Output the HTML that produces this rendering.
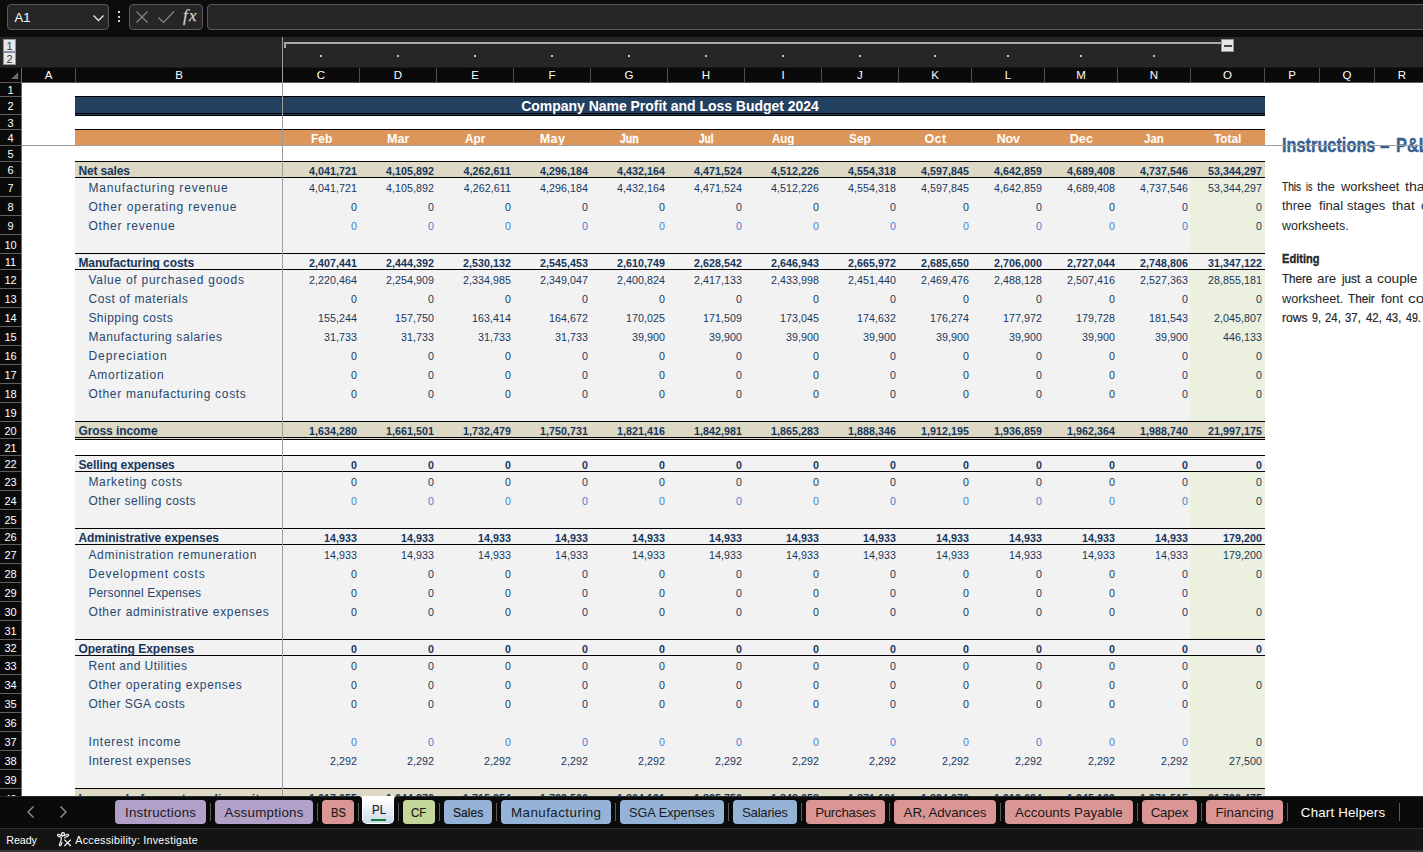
<!DOCTYPE html>
<html lang="en"><head><meta charset="utf-8"><title>Profit and Loss Budget 2024</title><style>
html,body{margin:0;padding:0;}
body{width:1423px;height:852px;overflow:hidden;background:#fff;position:relative;}
#root{position:absolute;left:0;top:0;width:1423px;height:852px;overflow:hidden;background:#fff;}
#root div,#root span,#root svg{position:absolute;}
#root span{white-space:nowrap;}
#sheet{left:0;top:0;width:1423px;height:796px;overflow:hidden;}
</style></head><body><div id="root">
<div id="sheet">
<div style="left:75px;top:178px;width:1190px;height:244px;background:#f2f2f2;"></div>
<div style="left:75px;top:456px;width:1190px;height:333px;background:#f2f2f2;"></div>
<div style="left:1190px;top:178px;width:75px;height:76px;background:#ebf1de;"></div>
<div style="left:1190px;top:270px;width:75px;height:152px;background:#ebf1de;"></div>
<div style="left:1190px;top:472px;width:75px;height:57px;background:#ebf1de;"></div>
<div style="left:1190px;top:545px;width:75px;height:95px;background:#ebf1de;"></div>
<div style="left:1190px;top:656px;width:75px;height:133px;background:#ebf1de;"></div>
<div style="left:75px;top:96px;width:1190px;height:20px;background:#244061;border-top:1px solid #000;border-bottom:1px solid #000;box-sizing:border-box;"></div>
<div style="left:75px;top:113px;width:1190px;height:1px;background:#000;"></div>
<div style="left:75px;top:129px;width:1190px;height:16px;background:#dd9659;border-top:1px solid #000;box-sizing:border-box;"></div>
<div style="left:75px;top:161px;width:1190px;height:17px;background:#ddd9c4;border-top:1px solid #000;border-bottom:1px solid #000;box-sizing:border-box;"></div>
<div style="left:75px;top:421px;width:1190px;height:19px;background:#ddd9c4;border-top:1px solid #000;border-bottom:1px solid #000;box-sizing:border-box;"></div>
<div style="left:75px;top:437px;width:1190px;height:1px;background:#000;"></div>
<div style="left:75px;top:788px;width:1190px;height:20px;background:#ddd9c4;border-top:1px solid #000;box-sizing:border-box;"></div>
<div style="left:75px;top:253px;width:1190px;height:1px;background:#000;"></div>
<div style="left:75px;top:269px;width:1190px;height:1px;background:#000;"></div>
<div style="left:75px;top:455px;width:1190px;height:1px;background:#000;"></div>
<div style="left:75px;top:471px;width:1190px;height:1px;background:#000;"></div>
<div style="left:75px;top:528px;width:1190px;height:1px;background:#000;"></div>
<div style="left:75px;top:544px;width:1190px;height:1px;background:#000;"></div>
<div style="left:75px;top:639px;width:1190px;height:1px;background:#000;"></div>
<div style="left:75px;top:655px;width:1190px;height:1px;background:#000;"></div>
<span style="top:162.84px;font:700 12px/16px 'Liberation Sans',sans-serif;color:#17365d;letter-spacing:-0.135px;left:78.40px;">Net sales</span>
<span style="top:164.30px;font:700 10.67px/14px 'Liberation Sans',sans-serif;color:#17365d;letter-spacing:0.070px;left:308.96px;">4,041,721</span>
<span style="top:164.30px;font:700 10.67px/14px 'Liberation Sans',sans-serif;color:#17365d;letter-spacing:0.070px;left:385.96px;">4,105,892</span>
<span style="top:164.30px;font:700 10.67px/14px 'Liberation Sans',sans-serif;color:#17365d;letter-spacing:0.070px;left:463.55px;">4,262,611</span>
<span style="top:164.30px;font:700 10.67px/14px 'Liberation Sans',sans-serif;color:#17365d;letter-spacing:0.070px;left:539.96px;">4,296,184</span>
<span style="top:164.30px;font:700 10.67px/14px 'Liberation Sans',sans-serif;color:#17365d;letter-spacing:0.070px;left:616.96px;">4,432,164</span>
<span style="top:164.30px;font:700 10.67px/14px 'Liberation Sans',sans-serif;color:#17365d;letter-spacing:0.070px;left:693.96px;">4,471,524</span>
<span style="top:164.30px;font:700 10.67px/14px 'Liberation Sans',sans-serif;color:#17365d;letter-spacing:0.070px;left:770.96px;">4,512,226</span>
<span style="top:164.30px;font:700 10.67px/14px 'Liberation Sans',sans-serif;color:#17365d;letter-spacing:0.070px;left:847.96px;">4,554,318</span>
<span style="top:164.30px;font:700 10.67px/14px 'Liberation Sans',sans-serif;color:#17365d;letter-spacing:0.070px;left:920.96px;">4,597,845</span>
<span style="top:164.30px;font:700 10.67px/14px 'Liberation Sans',sans-serif;color:#17365d;letter-spacing:0.070px;left:993.96px;">4,642,859</span>
<span style="top:164.30px;font:700 10.67px/14px 'Liberation Sans',sans-serif;color:#17365d;letter-spacing:0.070px;left:1066.96px;">4,689,408</span>
<span style="top:164.30px;font:700 10.67px/14px 'Liberation Sans',sans-serif;color:#17365d;letter-spacing:0.070px;left:1139.96px;">4,737,546</span>
<span style="top:164.30px;font:700 10.67px/14px 'Liberation Sans',sans-serif;color:#17365d;letter-spacing:0.070px;left:1207.97px;">53,344,297</span>
<span style="top:179.84px;font:400 12px/16px 'Liberation Sans',sans-serif;color:#26476f;letter-spacing:0.827px;left:88.40px;">Manufacturing revenue</span>
<span style="top:181.30px;font:400 10.67px/14px 'Liberation Sans',sans-serif;color:#17365d;letter-spacing:0.070px;left:308.96px;">4,041,721</span>
<span style="top:181.30px;font:400 10.67px/14px 'Liberation Sans',sans-serif;color:#17365d;letter-spacing:0.070px;left:385.96px;">4,105,892</span>
<span style="top:181.30px;font:400 10.67px/14px 'Liberation Sans',sans-serif;color:#17365d;letter-spacing:0.070px;left:463.76px;">4,262,611</span>
<span style="top:181.30px;font:400 10.67px/14px 'Liberation Sans',sans-serif;color:#17365d;letter-spacing:0.070px;left:539.96px;">4,296,184</span>
<span style="top:181.30px;font:400 10.67px/14px 'Liberation Sans',sans-serif;color:#17365d;letter-spacing:0.070px;left:616.96px;">4,432,164</span>
<span style="top:181.30px;font:400 10.67px/14px 'Liberation Sans',sans-serif;color:#17365d;letter-spacing:0.070px;left:693.96px;">4,471,524</span>
<span style="top:181.30px;font:400 10.67px/14px 'Liberation Sans',sans-serif;color:#17365d;letter-spacing:0.070px;left:770.96px;">4,512,226</span>
<span style="top:181.30px;font:400 10.67px/14px 'Liberation Sans',sans-serif;color:#17365d;letter-spacing:0.070px;left:847.96px;">4,554,318</span>
<span style="top:181.30px;font:400 10.67px/14px 'Liberation Sans',sans-serif;color:#17365d;letter-spacing:0.070px;left:920.96px;">4,597,845</span>
<span style="top:181.30px;font:400 10.67px/14px 'Liberation Sans',sans-serif;color:#17365d;letter-spacing:0.070px;left:993.96px;">4,642,859</span>
<span style="top:181.30px;font:400 10.67px/14px 'Liberation Sans',sans-serif;color:#17365d;letter-spacing:0.070px;left:1066.96px;">4,689,408</span>
<span style="top:181.30px;font:400 10.67px/14px 'Liberation Sans',sans-serif;color:#17365d;letter-spacing:0.070px;left:1139.96px;">4,737,546</span>
<span style="top:181.30px;font:400 10.67px/14px 'Liberation Sans',sans-serif;color:#17365d;letter-spacing:0.070px;left:1207.97px;">53,344,297</span>
<span style="top:198.84px;font:400 12px/16px 'Liberation Sans',sans-serif;color:#26476f;letter-spacing:0.819px;left:88.40px;">Other operating revenue</span>
<span style="top:200.30px;font:400 10.67px/14px 'Liberation Sans',sans-serif;color:#17365d;letter-spacing:0.070px;left:351.08px;">0</span>
<span style="top:200.30px;font:400 10.67px/14px 'Liberation Sans',sans-serif;color:#17365d;letter-spacing:0.070px;left:428.08px;">0</span>
<span style="top:200.30px;font:400 10.67px/14px 'Liberation Sans',sans-serif;color:#17365d;letter-spacing:0.070px;left:505.08px;">0</span>
<span style="top:200.30px;font:400 10.67px/14px 'Liberation Sans',sans-serif;color:#17365d;letter-spacing:0.070px;left:582.08px;">0</span>
<span style="top:200.30px;font:400 10.67px/14px 'Liberation Sans',sans-serif;color:#17365d;letter-spacing:0.070px;left:659.08px;">0</span>
<span style="top:200.30px;font:400 10.67px/14px 'Liberation Sans',sans-serif;color:#17365d;letter-spacing:0.070px;left:736.08px;">0</span>
<span style="top:200.30px;font:400 10.67px/14px 'Liberation Sans',sans-serif;color:#17365d;letter-spacing:0.070px;left:813.08px;">0</span>
<span style="top:200.30px;font:400 10.67px/14px 'Liberation Sans',sans-serif;color:#17365d;letter-spacing:0.070px;left:890.08px;">0</span>
<span style="top:200.30px;font:400 10.67px/14px 'Liberation Sans',sans-serif;color:#17365d;letter-spacing:0.070px;left:963.08px;">0</span>
<span style="top:200.30px;font:400 10.67px/14px 'Liberation Sans',sans-serif;color:#17365d;letter-spacing:0.070px;left:1036.08px;">0</span>
<span style="top:200.30px;font:400 10.67px/14px 'Liberation Sans',sans-serif;color:#17365d;letter-spacing:0.070px;left:1109.08px;">0</span>
<span style="top:200.30px;font:400 10.67px/14px 'Liberation Sans',sans-serif;color:#17365d;letter-spacing:0.070px;left:1182.08px;">0</span>
<span style="top:200.30px;font:400 10.67px/14px 'Liberation Sans',sans-serif;color:#17365d;letter-spacing:0.070px;left:1256.08px;">0</span>
<span style="top:217.84px;font:400 12px/16px 'Liberation Sans',sans-serif;color:#26476f;letter-spacing:0.797px;left:88.40px;">Other revenue</span>
<span style="top:219.30px;font:400 10.67px/14px 'Liberation Sans',sans-serif;color:#4680d2;letter-spacing:0.070px;left:351.08px;">0</span>
<span style="top:219.30px;font:400 10.67px/14px 'Liberation Sans',sans-serif;color:#4680d2;letter-spacing:0.070px;left:428.08px;">0</span>
<span style="top:219.30px;font:400 10.67px/14px 'Liberation Sans',sans-serif;color:#4680d2;letter-spacing:0.070px;left:505.08px;">0</span>
<span style="top:219.30px;font:400 10.67px/14px 'Liberation Sans',sans-serif;color:#4680d2;letter-spacing:0.070px;left:582.08px;">0</span>
<span style="top:219.30px;font:400 10.67px/14px 'Liberation Sans',sans-serif;color:#4680d2;letter-spacing:0.070px;left:659.08px;">0</span>
<span style="top:219.30px;font:400 10.67px/14px 'Liberation Sans',sans-serif;color:#4680d2;letter-spacing:0.070px;left:736.08px;">0</span>
<span style="top:219.30px;font:400 10.67px/14px 'Liberation Sans',sans-serif;color:#4680d2;letter-spacing:0.070px;left:813.08px;">0</span>
<span style="top:219.30px;font:400 10.67px/14px 'Liberation Sans',sans-serif;color:#4680d2;letter-spacing:0.070px;left:890.08px;">0</span>
<span style="top:219.30px;font:400 10.67px/14px 'Liberation Sans',sans-serif;color:#4680d2;letter-spacing:0.070px;left:963.08px;">0</span>
<span style="top:219.30px;font:400 10.67px/14px 'Liberation Sans',sans-serif;color:#4680d2;letter-spacing:0.070px;left:1036.08px;">0</span>
<span style="top:219.30px;font:400 10.67px/14px 'Liberation Sans',sans-serif;color:#4680d2;letter-spacing:0.070px;left:1109.08px;">0</span>
<span style="top:219.30px;font:400 10.67px/14px 'Liberation Sans',sans-serif;color:#4680d2;letter-spacing:0.070px;left:1182.08px;">0</span>
<span style="top:219.30px;font:400 10.67px/14px 'Liberation Sans',sans-serif;color:#17365d;letter-spacing:0.070px;left:1256.08px;">0</span>
<span style="top:254.84px;font:700 12px/16px 'Liberation Sans',sans-serif;color:#17365d;letter-spacing:-0.092px;left:78.40px;">Manufacturing costs</span>
<span style="top:256.30px;font:700 10.67px/14px 'Liberation Sans',sans-serif;color:#17365d;letter-spacing:0.070px;left:308.96px;">2,407,441</span>
<span style="top:256.30px;font:700 10.67px/14px 'Liberation Sans',sans-serif;color:#17365d;letter-spacing:0.070px;left:385.96px;">2,444,392</span>
<span style="top:256.30px;font:700 10.67px/14px 'Liberation Sans',sans-serif;color:#17365d;letter-spacing:0.070px;left:462.96px;">2,530,132</span>
<span style="top:256.30px;font:700 10.67px/14px 'Liberation Sans',sans-serif;color:#17365d;letter-spacing:0.070px;left:539.96px;">2,545,453</span>
<span style="top:256.30px;font:700 10.67px/14px 'Liberation Sans',sans-serif;color:#17365d;letter-spacing:0.070px;left:616.96px;">2,610,749</span>
<span style="top:256.30px;font:700 10.67px/14px 'Liberation Sans',sans-serif;color:#17365d;letter-spacing:0.070px;left:693.96px;">2,628,542</span>
<span style="top:256.30px;font:700 10.67px/14px 'Liberation Sans',sans-serif;color:#17365d;letter-spacing:0.070px;left:770.96px;">2,646,943</span>
<span style="top:256.30px;font:700 10.67px/14px 'Liberation Sans',sans-serif;color:#17365d;letter-spacing:0.070px;left:847.96px;">2,665,972</span>
<span style="top:256.30px;font:700 10.67px/14px 'Liberation Sans',sans-serif;color:#17365d;letter-spacing:0.070px;left:920.96px;">2,685,650</span>
<span style="top:256.30px;font:700 10.67px/14px 'Liberation Sans',sans-serif;color:#17365d;letter-spacing:0.070px;left:993.96px;">2,706,000</span>
<span style="top:256.30px;font:700 10.67px/14px 'Liberation Sans',sans-serif;color:#17365d;letter-spacing:0.070px;left:1066.96px;">2,727,044</span>
<span style="top:256.30px;font:700 10.67px/14px 'Liberation Sans',sans-serif;color:#17365d;letter-spacing:0.070px;left:1139.96px;">2,748,806</span>
<span style="top:256.30px;font:700 10.67px/14px 'Liberation Sans',sans-serif;color:#17365d;letter-spacing:0.070px;left:1207.97px;">31,347,122</span>
<span style="top:271.84px;font:400 12px/16px 'Liberation Sans',sans-serif;color:#26476f;letter-spacing:0.737px;left:88.40px;">Value of purchased goods</span>
<span style="top:273.30px;font:400 10.67px/14px 'Liberation Sans',sans-serif;color:#17365d;letter-spacing:0.070px;left:308.96px;">2,220,464</span>
<span style="top:273.30px;font:400 10.67px/14px 'Liberation Sans',sans-serif;color:#17365d;letter-spacing:0.070px;left:385.96px;">2,254,909</span>
<span style="top:273.30px;font:400 10.67px/14px 'Liberation Sans',sans-serif;color:#17365d;letter-spacing:0.070px;left:462.96px;">2,334,985</span>
<span style="top:273.30px;font:400 10.67px/14px 'Liberation Sans',sans-serif;color:#17365d;letter-spacing:0.070px;left:539.96px;">2,349,047</span>
<span style="top:273.30px;font:400 10.67px/14px 'Liberation Sans',sans-serif;color:#17365d;letter-spacing:0.070px;left:616.96px;">2,400,824</span>
<span style="top:273.30px;font:400 10.67px/14px 'Liberation Sans',sans-serif;color:#17365d;letter-spacing:0.070px;left:693.96px;">2,417,133</span>
<span style="top:273.30px;font:400 10.67px/14px 'Liberation Sans',sans-serif;color:#17365d;letter-spacing:0.070px;left:770.96px;">2,433,998</span>
<span style="top:273.30px;font:400 10.67px/14px 'Liberation Sans',sans-serif;color:#17365d;letter-spacing:0.070px;left:847.96px;">2,451,440</span>
<span style="top:273.30px;font:400 10.67px/14px 'Liberation Sans',sans-serif;color:#17365d;letter-spacing:0.070px;left:920.96px;">2,469,476</span>
<span style="top:273.30px;font:400 10.67px/14px 'Liberation Sans',sans-serif;color:#17365d;letter-spacing:0.070px;left:993.96px;">2,488,128</span>
<span style="top:273.30px;font:400 10.67px/14px 'Liberation Sans',sans-serif;color:#17365d;letter-spacing:0.070px;left:1066.96px;">2,507,416</span>
<span style="top:273.30px;font:400 10.67px/14px 'Liberation Sans',sans-serif;color:#17365d;letter-spacing:0.070px;left:1139.96px;">2,527,363</span>
<span style="top:273.30px;font:400 10.67px/14px 'Liberation Sans',sans-serif;color:#17365d;letter-spacing:0.070px;left:1207.97px;">28,855,181</span>
<span style="top:290.84px;font:400 12px/16px 'Liberation Sans',sans-serif;color:#26476f;letter-spacing:0.590px;left:88.40px;">Cost of materials</span>
<span style="top:292.30px;font:400 10.67px/14px 'Liberation Sans',sans-serif;color:#17365d;letter-spacing:0.070px;left:351.08px;">0</span>
<span style="top:292.30px;font:400 10.67px/14px 'Liberation Sans',sans-serif;color:#17365d;letter-spacing:0.070px;left:428.08px;">0</span>
<span style="top:292.30px;font:400 10.67px/14px 'Liberation Sans',sans-serif;color:#17365d;letter-spacing:0.070px;left:505.08px;">0</span>
<span style="top:292.30px;font:400 10.67px/14px 'Liberation Sans',sans-serif;color:#17365d;letter-spacing:0.070px;left:582.08px;">0</span>
<span style="top:292.30px;font:400 10.67px/14px 'Liberation Sans',sans-serif;color:#17365d;letter-spacing:0.070px;left:659.08px;">0</span>
<span style="top:292.30px;font:400 10.67px/14px 'Liberation Sans',sans-serif;color:#17365d;letter-spacing:0.070px;left:736.08px;">0</span>
<span style="top:292.30px;font:400 10.67px/14px 'Liberation Sans',sans-serif;color:#17365d;letter-spacing:0.070px;left:813.08px;">0</span>
<span style="top:292.30px;font:400 10.67px/14px 'Liberation Sans',sans-serif;color:#17365d;letter-spacing:0.070px;left:890.08px;">0</span>
<span style="top:292.30px;font:400 10.67px/14px 'Liberation Sans',sans-serif;color:#17365d;letter-spacing:0.070px;left:963.08px;">0</span>
<span style="top:292.30px;font:400 10.67px/14px 'Liberation Sans',sans-serif;color:#17365d;letter-spacing:0.070px;left:1036.08px;">0</span>
<span style="top:292.30px;font:400 10.67px/14px 'Liberation Sans',sans-serif;color:#17365d;letter-spacing:0.070px;left:1109.08px;">0</span>
<span style="top:292.30px;font:400 10.67px/14px 'Liberation Sans',sans-serif;color:#17365d;letter-spacing:0.070px;left:1182.08px;">0</span>
<span style="top:292.30px;font:400 10.67px/14px 'Liberation Sans',sans-serif;color:#17365d;letter-spacing:0.070px;left:1256.08px;">0</span>
<span style="top:309.84px;font:400 12px/16px 'Liberation Sans',sans-serif;color:#26476f;letter-spacing:0.480px;left:88.40px;">Shipping costs</span>
<span style="top:311.30px;font:400 10.67px/14px 'Liberation Sans',sans-serif;color:#17365d;letter-spacing:0.070px;left:318.01px;">155,244</span>
<span style="top:311.30px;font:400 10.67px/14px 'Liberation Sans',sans-serif;color:#17365d;letter-spacing:0.070px;left:395.01px;">157,750</span>
<span style="top:311.30px;font:400 10.67px/14px 'Liberation Sans',sans-serif;color:#17365d;letter-spacing:0.070px;left:472.01px;">163,414</span>
<span style="top:311.30px;font:400 10.67px/14px 'Liberation Sans',sans-serif;color:#17365d;letter-spacing:0.070px;left:549.01px;">164,672</span>
<span style="top:311.30px;font:400 10.67px/14px 'Liberation Sans',sans-serif;color:#17365d;letter-spacing:0.070px;left:626.01px;">170,025</span>
<span style="top:311.30px;font:400 10.67px/14px 'Liberation Sans',sans-serif;color:#17365d;letter-spacing:0.070px;left:703.01px;">171,509</span>
<span style="top:311.30px;font:400 10.67px/14px 'Liberation Sans',sans-serif;color:#17365d;letter-spacing:0.070px;left:780.01px;">173,045</span>
<span style="top:311.30px;font:400 10.67px/14px 'Liberation Sans',sans-serif;color:#17365d;letter-spacing:0.070px;left:857.01px;">174,632</span>
<span style="top:311.30px;font:400 10.67px/14px 'Liberation Sans',sans-serif;color:#17365d;letter-spacing:0.070px;left:930.01px;">176,274</span>
<span style="top:311.30px;font:400 10.67px/14px 'Liberation Sans',sans-serif;color:#17365d;letter-spacing:0.070px;left:1003.01px;">177,972</span>
<span style="top:311.30px;font:400 10.67px/14px 'Liberation Sans',sans-serif;color:#17365d;letter-spacing:0.070px;left:1076.01px;">179,728</span>
<span style="top:311.30px;font:400 10.67px/14px 'Liberation Sans',sans-serif;color:#17365d;letter-spacing:0.070px;left:1149.01px;">181,543</span>
<span style="top:311.30px;font:400 10.67px/14px 'Liberation Sans',sans-serif;color:#17365d;letter-spacing:0.070px;left:1213.96px;">2,045,807</span>
<span style="top:328.84px;font:400 12px/16px 'Liberation Sans',sans-serif;color:#26476f;letter-spacing:0.613px;left:88.40px;">Manufacturing salaries</span>
<span style="top:330.30px;font:400 10.67px/14px 'Liberation Sans',sans-serif;color:#17365d;letter-spacing:0.070px;left:324.00px;">31,733</span>
<span style="top:330.30px;font:400 10.67px/14px 'Liberation Sans',sans-serif;color:#17365d;letter-spacing:0.070px;left:401.00px;">31,733</span>
<span style="top:330.30px;font:400 10.67px/14px 'Liberation Sans',sans-serif;color:#17365d;letter-spacing:0.070px;left:478.00px;">31,733</span>
<span style="top:330.30px;font:400 10.67px/14px 'Liberation Sans',sans-serif;color:#17365d;letter-spacing:0.070px;left:555.00px;">31,733</span>
<span style="top:330.30px;font:400 10.67px/14px 'Liberation Sans',sans-serif;color:#17365d;letter-spacing:0.070px;left:632.00px;">39,900</span>
<span style="top:330.30px;font:400 10.67px/14px 'Liberation Sans',sans-serif;color:#17365d;letter-spacing:0.070px;left:709.00px;">39,900</span>
<span style="top:330.30px;font:400 10.67px/14px 'Liberation Sans',sans-serif;color:#17365d;letter-spacing:0.070px;left:786.00px;">39,900</span>
<span style="top:330.30px;font:400 10.67px/14px 'Liberation Sans',sans-serif;color:#17365d;letter-spacing:0.070px;left:863.00px;">39,900</span>
<span style="top:330.30px;font:400 10.67px/14px 'Liberation Sans',sans-serif;color:#17365d;letter-spacing:0.070px;left:936.00px;">39,900</span>
<span style="top:330.30px;font:400 10.67px/14px 'Liberation Sans',sans-serif;color:#17365d;letter-spacing:0.070px;left:1009.00px;">39,900</span>
<span style="top:330.30px;font:400 10.67px/14px 'Liberation Sans',sans-serif;color:#17365d;letter-spacing:0.070px;left:1082.00px;">39,900</span>
<span style="top:330.30px;font:400 10.67px/14px 'Liberation Sans',sans-serif;color:#17365d;letter-spacing:0.070px;left:1155.00px;">39,900</span>
<span style="top:330.30px;font:400 10.67px/14px 'Liberation Sans',sans-serif;color:#17365d;letter-spacing:0.070px;left:1223.01px;">446,133</span>
<span style="top:347.84px;font:400 12px/16px 'Liberation Sans',sans-serif;color:#26476f;letter-spacing:0.984px;left:88.40px;">Depreciation</span>
<span style="top:349.30px;font:400 10.67px/14px 'Liberation Sans',sans-serif;color:#17365d;letter-spacing:0.070px;left:351.08px;">0</span>
<span style="top:349.30px;font:400 10.67px/14px 'Liberation Sans',sans-serif;color:#17365d;letter-spacing:0.070px;left:428.08px;">0</span>
<span style="top:349.30px;font:400 10.67px/14px 'Liberation Sans',sans-serif;color:#17365d;letter-spacing:0.070px;left:505.08px;">0</span>
<span style="top:349.30px;font:400 10.67px/14px 'Liberation Sans',sans-serif;color:#17365d;letter-spacing:0.070px;left:582.08px;">0</span>
<span style="top:349.30px;font:400 10.67px/14px 'Liberation Sans',sans-serif;color:#17365d;letter-spacing:0.070px;left:659.08px;">0</span>
<span style="top:349.30px;font:400 10.67px/14px 'Liberation Sans',sans-serif;color:#17365d;letter-spacing:0.070px;left:736.08px;">0</span>
<span style="top:349.30px;font:400 10.67px/14px 'Liberation Sans',sans-serif;color:#17365d;letter-spacing:0.070px;left:813.08px;">0</span>
<span style="top:349.30px;font:400 10.67px/14px 'Liberation Sans',sans-serif;color:#17365d;letter-spacing:0.070px;left:890.08px;">0</span>
<span style="top:349.30px;font:400 10.67px/14px 'Liberation Sans',sans-serif;color:#17365d;letter-spacing:0.070px;left:963.08px;">0</span>
<span style="top:349.30px;font:400 10.67px/14px 'Liberation Sans',sans-serif;color:#17365d;letter-spacing:0.070px;left:1036.08px;">0</span>
<span style="top:349.30px;font:400 10.67px/14px 'Liberation Sans',sans-serif;color:#17365d;letter-spacing:0.070px;left:1109.08px;">0</span>
<span style="top:349.30px;font:400 10.67px/14px 'Liberation Sans',sans-serif;color:#17365d;letter-spacing:0.070px;left:1182.08px;">0</span>
<span style="top:349.30px;font:400 10.67px/14px 'Liberation Sans',sans-serif;color:#17365d;letter-spacing:0.070px;left:1256.08px;">0</span>
<span style="top:366.84px;font:400 12px/16px 'Liberation Sans',sans-serif;color:#26476f;letter-spacing:0.771px;left:88.40px;">Amortization</span>
<span style="top:368.30px;font:400 10.67px/14px 'Liberation Sans',sans-serif;color:#17365d;letter-spacing:0.070px;left:351.08px;">0</span>
<span style="top:368.30px;font:400 10.67px/14px 'Liberation Sans',sans-serif;color:#17365d;letter-spacing:0.070px;left:428.08px;">0</span>
<span style="top:368.30px;font:400 10.67px/14px 'Liberation Sans',sans-serif;color:#17365d;letter-spacing:0.070px;left:505.08px;">0</span>
<span style="top:368.30px;font:400 10.67px/14px 'Liberation Sans',sans-serif;color:#17365d;letter-spacing:0.070px;left:582.08px;">0</span>
<span style="top:368.30px;font:400 10.67px/14px 'Liberation Sans',sans-serif;color:#17365d;letter-spacing:0.070px;left:659.08px;">0</span>
<span style="top:368.30px;font:400 10.67px/14px 'Liberation Sans',sans-serif;color:#17365d;letter-spacing:0.070px;left:736.08px;">0</span>
<span style="top:368.30px;font:400 10.67px/14px 'Liberation Sans',sans-serif;color:#17365d;letter-spacing:0.070px;left:813.08px;">0</span>
<span style="top:368.30px;font:400 10.67px/14px 'Liberation Sans',sans-serif;color:#17365d;letter-spacing:0.070px;left:890.08px;">0</span>
<span style="top:368.30px;font:400 10.67px/14px 'Liberation Sans',sans-serif;color:#17365d;letter-spacing:0.070px;left:963.08px;">0</span>
<span style="top:368.30px;font:400 10.67px/14px 'Liberation Sans',sans-serif;color:#17365d;letter-spacing:0.070px;left:1036.08px;">0</span>
<span style="top:368.30px;font:400 10.67px/14px 'Liberation Sans',sans-serif;color:#17365d;letter-spacing:0.070px;left:1109.08px;">0</span>
<span style="top:368.30px;font:400 10.67px/14px 'Liberation Sans',sans-serif;color:#17365d;letter-spacing:0.070px;left:1182.08px;">0</span>
<span style="top:368.30px;font:400 10.67px/14px 'Liberation Sans',sans-serif;color:#17365d;letter-spacing:0.070px;left:1256.08px;">0</span>
<span style="top:385.84px;font:400 12px/16px 'Liberation Sans',sans-serif;color:#26476f;letter-spacing:0.698px;left:88.40px;">Other manufacturing costs</span>
<span style="top:387.30px;font:400 10.67px/14px 'Liberation Sans',sans-serif;color:#17365d;letter-spacing:0.070px;left:351.08px;">0</span>
<span style="top:387.30px;font:400 10.67px/14px 'Liberation Sans',sans-serif;color:#17365d;letter-spacing:0.070px;left:428.08px;">0</span>
<span style="top:387.30px;font:400 10.67px/14px 'Liberation Sans',sans-serif;color:#17365d;letter-spacing:0.070px;left:505.08px;">0</span>
<span style="top:387.30px;font:400 10.67px/14px 'Liberation Sans',sans-serif;color:#17365d;letter-spacing:0.070px;left:582.08px;">0</span>
<span style="top:387.30px;font:400 10.67px/14px 'Liberation Sans',sans-serif;color:#17365d;letter-spacing:0.070px;left:659.08px;">0</span>
<span style="top:387.30px;font:400 10.67px/14px 'Liberation Sans',sans-serif;color:#17365d;letter-spacing:0.070px;left:736.08px;">0</span>
<span style="top:387.30px;font:400 10.67px/14px 'Liberation Sans',sans-serif;color:#17365d;letter-spacing:0.070px;left:813.08px;">0</span>
<span style="top:387.30px;font:400 10.67px/14px 'Liberation Sans',sans-serif;color:#17365d;letter-spacing:0.070px;left:890.08px;">0</span>
<span style="top:387.30px;font:400 10.67px/14px 'Liberation Sans',sans-serif;color:#17365d;letter-spacing:0.070px;left:963.08px;">0</span>
<span style="top:387.30px;font:400 10.67px/14px 'Liberation Sans',sans-serif;color:#17365d;letter-spacing:0.070px;left:1036.08px;">0</span>
<span style="top:387.30px;font:400 10.67px/14px 'Liberation Sans',sans-serif;color:#17365d;letter-spacing:0.070px;left:1109.08px;">0</span>
<span style="top:387.30px;font:400 10.67px/14px 'Liberation Sans',sans-serif;color:#17365d;letter-spacing:0.070px;left:1182.08px;">0</span>
<span style="top:387.30px;font:400 10.67px/14px 'Liberation Sans',sans-serif;color:#17365d;letter-spacing:0.070px;left:1256.08px;">0</span>
<span style="top:422.84px;font:700 12px/16px 'Liberation Sans',sans-serif;color:#17365d;letter-spacing:-0.076px;left:78.40px;">Gross income</span>
<span style="top:424.30px;font:700 10.67px/14px 'Liberation Sans',sans-serif;color:#17365d;letter-spacing:0.070px;left:308.96px;">1,634,280</span>
<span style="top:424.30px;font:700 10.67px/14px 'Liberation Sans',sans-serif;color:#17365d;letter-spacing:0.070px;left:385.96px;">1,661,501</span>
<span style="top:424.30px;font:700 10.67px/14px 'Liberation Sans',sans-serif;color:#17365d;letter-spacing:0.070px;left:462.96px;">1,732,479</span>
<span style="top:424.30px;font:700 10.67px/14px 'Liberation Sans',sans-serif;color:#17365d;letter-spacing:0.070px;left:539.96px;">1,750,731</span>
<span style="top:424.30px;font:700 10.67px/14px 'Liberation Sans',sans-serif;color:#17365d;letter-spacing:0.070px;left:616.96px;">1,821,416</span>
<span style="top:424.30px;font:700 10.67px/14px 'Liberation Sans',sans-serif;color:#17365d;letter-spacing:0.070px;left:693.96px;">1,842,981</span>
<span style="top:424.30px;font:700 10.67px/14px 'Liberation Sans',sans-serif;color:#17365d;letter-spacing:0.070px;left:770.96px;">1,865,283</span>
<span style="top:424.30px;font:700 10.67px/14px 'Liberation Sans',sans-serif;color:#17365d;letter-spacing:0.070px;left:847.96px;">1,888,346</span>
<span style="top:424.30px;font:700 10.67px/14px 'Liberation Sans',sans-serif;color:#17365d;letter-spacing:0.070px;left:920.96px;">1,912,195</span>
<span style="top:424.30px;font:700 10.67px/14px 'Liberation Sans',sans-serif;color:#17365d;letter-spacing:0.070px;left:993.96px;">1,936,859</span>
<span style="top:424.30px;font:700 10.67px/14px 'Liberation Sans',sans-serif;color:#17365d;letter-spacing:0.070px;left:1066.96px;">1,962,364</span>
<span style="top:424.30px;font:700 10.67px/14px 'Liberation Sans',sans-serif;color:#17365d;letter-spacing:0.070px;left:1139.96px;">1,988,740</span>
<span style="top:424.30px;font:700 10.67px/14px 'Liberation Sans',sans-serif;color:#17365d;letter-spacing:0.070px;left:1207.97px;">21,997,175</span>
<span style="top:456.84px;font:700 12px/16px 'Liberation Sans',sans-serif;color:#17365d;letter-spacing:-0.065px;left:78.40px;">Selling expenses</span>
<span style="top:458.30px;font:700 10.67px/14px 'Liberation Sans',sans-serif;color:#17365d;letter-spacing:0.070px;left:351.08px;">0</span>
<span style="top:458.30px;font:700 10.67px/14px 'Liberation Sans',sans-serif;color:#17365d;letter-spacing:0.070px;left:428.08px;">0</span>
<span style="top:458.30px;font:700 10.67px/14px 'Liberation Sans',sans-serif;color:#17365d;letter-spacing:0.070px;left:505.08px;">0</span>
<span style="top:458.30px;font:700 10.67px/14px 'Liberation Sans',sans-serif;color:#17365d;letter-spacing:0.070px;left:582.08px;">0</span>
<span style="top:458.30px;font:700 10.67px/14px 'Liberation Sans',sans-serif;color:#17365d;letter-spacing:0.070px;left:659.08px;">0</span>
<span style="top:458.30px;font:700 10.67px/14px 'Liberation Sans',sans-serif;color:#17365d;letter-spacing:0.070px;left:736.08px;">0</span>
<span style="top:458.30px;font:700 10.67px/14px 'Liberation Sans',sans-serif;color:#17365d;letter-spacing:0.070px;left:813.08px;">0</span>
<span style="top:458.30px;font:700 10.67px/14px 'Liberation Sans',sans-serif;color:#17365d;letter-spacing:0.070px;left:890.08px;">0</span>
<span style="top:458.30px;font:700 10.67px/14px 'Liberation Sans',sans-serif;color:#17365d;letter-spacing:0.070px;left:963.08px;">0</span>
<span style="top:458.30px;font:700 10.67px/14px 'Liberation Sans',sans-serif;color:#17365d;letter-spacing:0.070px;left:1036.08px;">0</span>
<span style="top:458.30px;font:700 10.67px/14px 'Liberation Sans',sans-serif;color:#17365d;letter-spacing:0.070px;left:1109.08px;">0</span>
<span style="top:458.30px;font:700 10.67px/14px 'Liberation Sans',sans-serif;color:#17365d;letter-spacing:0.070px;left:1182.08px;">0</span>
<span style="top:458.30px;font:700 10.67px/14px 'Liberation Sans',sans-serif;color:#17365d;letter-spacing:0.070px;left:1256.08px;">0</span>
<span style="top:473.84px;font:400 12px/16px 'Liberation Sans',sans-serif;color:#26476f;letter-spacing:0.681px;left:88.40px;">Marketing costs</span>
<span style="top:475.30px;font:400 10.67px/14px 'Liberation Sans',sans-serif;color:#17365d;letter-spacing:0.070px;left:351.08px;">0</span>
<span style="top:475.30px;font:400 10.67px/14px 'Liberation Sans',sans-serif;color:#17365d;letter-spacing:0.070px;left:428.08px;">0</span>
<span style="top:475.30px;font:400 10.67px/14px 'Liberation Sans',sans-serif;color:#17365d;letter-spacing:0.070px;left:505.08px;">0</span>
<span style="top:475.30px;font:400 10.67px/14px 'Liberation Sans',sans-serif;color:#17365d;letter-spacing:0.070px;left:582.08px;">0</span>
<span style="top:475.30px;font:400 10.67px/14px 'Liberation Sans',sans-serif;color:#17365d;letter-spacing:0.070px;left:659.08px;">0</span>
<span style="top:475.30px;font:400 10.67px/14px 'Liberation Sans',sans-serif;color:#17365d;letter-spacing:0.070px;left:736.08px;">0</span>
<span style="top:475.30px;font:400 10.67px/14px 'Liberation Sans',sans-serif;color:#17365d;letter-spacing:0.070px;left:813.08px;">0</span>
<span style="top:475.30px;font:400 10.67px/14px 'Liberation Sans',sans-serif;color:#17365d;letter-spacing:0.070px;left:890.08px;">0</span>
<span style="top:475.30px;font:400 10.67px/14px 'Liberation Sans',sans-serif;color:#17365d;letter-spacing:0.070px;left:963.08px;">0</span>
<span style="top:475.30px;font:400 10.67px/14px 'Liberation Sans',sans-serif;color:#17365d;letter-spacing:0.070px;left:1036.08px;">0</span>
<span style="top:475.30px;font:400 10.67px/14px 'Liberation Sans',sans-serif;color:#17365d;letter-spacing:0.070px;left:1109.08px;">0</span>
<span style="top:475.30px;font:400 10.67px/14px 'Liberation Sans',sans-serif;color:#17365d;letter-spacing:0.070px;left:1182.08px;">0</span>
<span style="top:475.30px;font:400 10.67px/14px 'Liberation Sans',sans-serif;color:#17365d;letter-spacing:0.070px;left:1256.08px;">0</span>
<span style="top:492.84px;font:400 12px/16px 'Liberation Sans',sans-serif;color:#26476f;letter-spacing:0.472px;left:88.40px;">Other selling costs</span>
<span style="top:494.30px;font:400 10.67px/14px 'Liberation Sans',sans-serif;color:#4680d2;letter-spacing:0.070px;left:351.08px;">0</span>
<span style="top:494.30px;font:400 10.67px/14px 'Liberation Sans',sans-serif;color:#4680d2;letter-spacing:0.070px;left:428.08px;">0</span>
<span style="top:494.30px;font:400 10.67px/14px 'Liberation Sans',sans-serif;color:#4680d2;letter-spacing:0.070px;left:505.08px;">0</span>
<span style="top:494.30px;font:400 10.67px/14px 'Liberation Sans',sans-serif;color:#4680d2;letter-spacing:0.070px;left:582.08px;">0</span>
<span style="top:494.30px;font:400 10.67px/14px 'Liberation Sans',sans-serif;color:#4680d2;letter-spacing:0.070px;left:659.08px;">0</span>
<span style="top:494.30px;font:400 10.67px/14px 'Liberation Sans',sans-serif;color:#4680d2;letter-spacing:0.070px;left:736.08px;">0</span>
<span style="top:494.30px;font:400 10.67px/14px 'Liberation Sans',sans-serif;color:#4680d2;letter-spacing:0.070px;left:813.08px;">0</span>
<span style="top:494.30px;font:400 10.67px/14px 'Liberation Sans',sans-serif;color:#4680d2;letter-spacing:0.070px;left:890.08px;">0</span>
<span style="top:494.30px;font:400 10.67px/14px 'Liberation Sans',sans-serif;color:#4680d2;letter-spacing:0.070px;left:963.08px;">0</span>
<span style="top:494.30px;font:400 10.67px/14px 'Liberation Sans',sans-serif;color:#4680d2;letter-spacing:0.070px;left:1036.08px;">0</span>
<span style="top:494.30px;font:400 10.67px/14px 'Liberation Sans',sans-serif;color:#4680d2;letter-spacing:0.070px;left:1109.08px;">0</span>
<span style="top:494.30px;font:400 10.67px/14px 'Liberation Sans',sans-serif;color:#4680d2;letter-spacing:0.070px;left:1182.08px;">0</span>
<span style="top:494.30px;font:400 10.67px/14px 'Liberation Sans',sans-serif;color:#17365d;letter-spacing:0.070px;left:1256.08px;">0</span>
<span style="top:529.84px;font:700 12px/16px 'Liberation Sans',sans-serif;color:#17365d;letter-spacing:-0.037px;left:78.40px;">Administrative expenses</span>
<span style="top:531.30px;font:700 10.67px/14px 'Liberation Sans',sans-serif;color:#17365d;letter-spacing:0.070px;left:324.00px;">14,933</span>
<span style="top:531.30px;font:700 10.67px/14px 'Liberation Sans',sans-serif;color:#17365d;letter-spacing:0.070px;left:401.00px;">14,933</span>
<span style="top:531.30px;font:700 10.67px/14px 'Liberation Sans',sans-serif;color:#17365d;letter-spacing:0.070px;left:478.00px;">14,933</span>
<span style="top:531.30px;font:700 10.67px/14px 'Liberation Sans',sans-serif;color:#17365d;letter-spacing:0.070px;left:555.00px;">14,933</span>
<span style="top:531.30px;font:700 10.67px/14px 'Liberation Sans',sans-serif;color:#17365d;letter-spacing:0.070px;left:632.00px;">14,933</span>
<span style="top:531.30px;font:700 10.67px/14px 'Liberation Sans',sans-serif;color:#17365d;letter-spacing:0.070px;left:709.00px;">14,933</span>
<span style="top:531.30px;font:700 10.67px/14px 'Liberation Sans',sans-serif;color:#17365d;letter-spacing:0.070px;left:786.00px;">14,933</span>
<span style="top:531.30px;font:700 10.67px/14px 'Liberation Sans',sans-serif;color:#17365d;letter-spacing:0.070px;left:863.00px;">14,933</span>
<span style="top:531.30px;font:700 10.67px/14px 'Liberation Sans',sans-serif;color:#17365d;letter-spacing:0.070px;left:936.00px;">14,933</span>
<span style="top:531.30px;font:700 10.67px/14px 'Liberation Sans',sans-serif;color:#17365d;letter-spacing:0.070px;left:1009.00px;">14,933</span>
<span style="top:531.30px;font:700 10.67px/14px 'Liberation Sans',sans-serif;color:#17365d;letter-spacing:0.070px;left:1082.00px;">14,933</span>
<span style="top:531.30px;font:700 10.67px/14px 'Liberation Sans',sans-serif;color:#17365d;letter-spacing:0.070px;left:1155.00px;">14,933</span>
<span style="top:531.30px;font:700 10.67px/14px 'Liberation Sans',sans-serif;color:#17365d;letter-spacing:0.070px;left:1223.01px;">179,200</span>
<span style="top:546.84px;font:400 12px/16px 'Liberation Sans',sans-serif;color:#26476f;letter-spacing:0.690px;left:88.40px;">Administration remuneration</span>
<span style="top:548.30px;font:400 10.67px/14px 'Liberation Sans',sans-serif;color:#17365d;letter-spacing:0.070px;left:324.00px;">14,933</span>
<span style="top:548.30px;font:400 10.67px/14px 'Liberation Sans',sans-serif;color:#17365d;letter-spacing:0.070px;left:401.00px;">14,933</span>
<span style="top:548.30px;font:400 10.67px/14px 'Liberation Sans',sans-serif;color:#17365d;letter-spacing:0.070px;left:478.00px;">14,933</span>
<span style="top:548.30px;font:400 10.67px/14px 'Liberation Sans',sans-serif;color:#17365d;letter-spacing:0.070px;left:555.00px;">14,933</span>
<span style="top:548.30px;font:400 10.67px/14px 'Liberation Sans',sans-serif;color:#17365d;letter-spacing:0.070px;left:632.00px;">14,933</span>
<span style="top:548.30px;font:400 10.67px/14px 'Liberation Sans',sans-serif;color:#17365d;letter-spacing:0.070px;left:709.00px;">14,933</span>
<span style="top:548.30px;font:400 10.67px/14px 'Liberation Sans',sans-serif;color:#17365d;letter-spacing:0.070px;left:786.00px;">14,933</span>
<span style="top:548.30px;font:400 10.67px/14px 'Liberation Sans',sans-serif;color:#17365d;letter-spacing:0.070px;left:863.00px;">14,933</span>
<span style="top:548.30px;font:400 10.67px/14px 'Liberation Sans',sans-serif;color:#17365d;letter-spacing:0.070px;left:936.00px;">14,933</span>
<span style="top:548.30px;font:400 10.67px/14px 'Liberation Sans',sans-serif;color:#17365d;letter-spacing:0.070px;left:1009.00px;">14,933</span>
<span style="top:548.30px;font:400 10.67px/14px 'Liberation Sans',sans-serif;color:#17365d;letter-spacing:0.070px;left:1082.00px;">14,933</span>
<span style="top:548.30px;font:400 10.67px/14px 'Liberation Sans',sans-serif;color:#17365d;letter-spacing:0.070px;left:1155.00px;">14,933</span>
<span style="top:548.30px;font:400 10.67px/14px 'Liberation Sans',sans-serif;color:#17365d;letter-spacing:0.070px;left:1223.01px;">179,200</span>
<span style="top:565.84px;font:400 12px/16px 'Liberation Sans',sans-serif;color:#26476f;letter-spacing:0.890px;left:88.40px;">Development costs</span>
<span style="top:567.30px;font:400 10.67px/14px 'Liberation Sans',sans-serif;color:#17365d;letter-spacing:0.070px;left:351.08px;">0</span>
<span style="top:567.30px;font:400 10.67px/14px 'Liberation Sans',sans-serif;color:#17365d;letter-spacing:0.070px;left:428.08px;">0</span>
<span style="top:567.30px;font:400 10.67px/14px 'Liberation Sans',sans-serif;color:#17365d;letter-spacing:0.070px;left:505.08px;">0</span>
<span style="top:567.30px;font:400 10.67px/14px 'Liberation Sans',sans-serif;color:#17365d;letter-spacing:0.070px;left:582.08px;">0</span>
<span style="top:567.30px;font:400 10.67px/14px 'Liberation Sans',sans-serif;color:#17365d;letter-spacing:0.070px;left:659.08px;">0</span>
<span style="top:567.30px;font:400 10.67px/14px 'Liberation Sans',sans-serif;color:#17365d;letter-spacing:0.070px;left:736.08px;">0</span>
<span style="top:567.30px;font:400 10.67px/14px 'Liberation Sans',sans-serif;color:#17365d;letter-spacing:0.070px;left:813.08px;">0</span>
<span style="top:567.30px;font:400 10.67px/14px 'Liberation Sans',sans-serif;color:#17365d;letter-spacing:0.070px;left:890.08px;">0</span>
<span style="top:567.30px;font:400 10.67px/14px 'Liberation Sans',sans-serif;color:#17365d;letter-spacing:0.070px;left:963.08px;">0</span>
<span style="top:567.30px;font:400 10.67px/14px 'Liberation Sans',sans-serif;color:#17365d;letter-spacing:0.070px;left:1036.08px;">0</span>
<span style="top:567.30px;font:400 10.67px/14px 'Liberation Sans',sans-serif;color:#17365d;letter-spacing:0.070px;left:1109.08px;">0</span>
<span style="top:567.30px;font:400 10.67px/14px 'Liberation Sans',sans-serif;color:#17365d;letter-spacing:0.070px;left:1182.08px;">0</span>
<span style="top:567.30px;font:400 10.67px/14px 'Liberation Sans',sans-serif;color:#17365d;letter-spacing:0.070px;left:1256.08px;">0</span>
<span style="top:584.84px;font:400 12px/16px 'Liberation Sans',sans-serif;color:#26476f;letter-spacing:0.147px;left:88.40px;">Personnel Expenses</span>
<span style="top:586.30px;font:400 10.67px/14px 'Liberation Sans',sans-serif;color:#17365d;letter-spacing:0.070px;left:351.08px;">0</span>
<span style="top:586.30px;font:400 10.67px/14px 'Liberation Sans',sans-serif;color:#17365d;letter-spacing:0.070px;left:428.08px;">0</span>
<span style="top:586.30px;font:400 10.67px/14px 'Liberation Sans',sans-serif;color:#17365d;letter-spacing:0.070px;left:505.08px;">0</span>
<span style="top:586.30px;font:400 10.67px/14px 'Liberation Sans',sans-serif;color:#17365d;letter-spacing:0.070px;left:582.08px;">0</span>
<span style="top:586.30px;font:400 10.67px/14px 'Liberation Sans',sans-serif;color:#17365d;letter-spacing:0.070px;left:659.08px;">0</span>
<span style="top:586.30px;font:400 10.67px/14px 'Liberation Sans',sans-serif;color:#17365d;letter-spacing:0.070px;left:736.08px;">0</span>
<span style="top:586.30px;font:400 10.67px/14px 'Liberation Sans',sans-serif;color:#17365d;letter-spacing:0.070px;left:813.08px;">0</span>
<span style="top:586.30px;font:400 10.67px/14px 'Liberation Sans',sans-serif;color:#17365d;letter-spacing:0.070px;left:890.08px;">0</span>
<span style="top:586.30px;font:400 10.67px/14px 'Liberation Sans',sans-serif;color:#17365d;letter-spacing:0.070px;left:963.08px;">0</span>
<span style="top:586.30px;font:400 10.67px/14px 'Liberation Sans',sans-serif;color:#17365d;letter-spacing:0.070px;left:1036.08px;">0</span>
<span style="top:586.30px;font:400 10.67px/14px 'Liberation Sans',sans-serif;color:#17365d;letter-spacing:0.070px;left:1109.08px;">0</span>
<span style="top:586.30px;font:400 10.67px/14px 'Liberation Sans',sans-serif;color:#17365d;letter-spacing:0.070px;left:1182.08px;">0</span>
<span style="top:603.84px;font:400 12px/16px 'Liberation Sans',sans-serif;color:#26476f;letter-spacing:0.655px;left:88.40px;">Other administrative expenses</span>
<span style="top:605.30px;font:400 10.67px/14px 'Liberation Sans',sans-serif;color:#17365d;letter-spacing:0.070px;left:351.08px;">0</span>
<span style="top:605.30px;font:400 10.67px/14px 'Liberation Sans',sans-serif;color:#17365d;letter-spacing:0.070px;left:428.08px;">0</span>
<span style="top:605.30px;font:400 10.67px/14px 'Liberation Sans',sans-serif;color:#17365d;letter-spacing:0.070px;left:505.08px;">0</span>
<span style="top:605.30px;font:400 10.67px/14px 'Liberation Sans',sans-serif;color:#17365d;letter-spacing:0.070px;left:582.08px;">0</span>
<span style="top:605.30px;font:400 10.67px/14px 'Liberation Sans',sans-serif;color:#17365d;letter-spacing:0.070px;left:659.08px;">0</span>
<span style="top:605.30px;font:400 10.67px/14px 'Liberation Sans',sans-serif;color:#17365d;letter-spacing:0.070px;left:736.08px;">0</span>
<span style="top:605.30px;font:400 10.67px/14px 'Liberation Sans',sans-serif;color:#17365d;letter-spacing:0.070px;left:813.08px;">0</span>
<span style="top:605.30px;font:400 10.67px/14px 'Liberation Sans',sans-serif;color:#17365d;letter-spacing:0.070px;left:890.08px;">0</span>
<span style="top:605.30px;font:400 10.67px/14px 'Liberation Sans',sans-serif;color:#17365d;letter-spacing:0.070px;left:963.08px;">0</span>
<span style="top:605.30px;font:400 10.67px/14px 'Liberation Sans',sans-serif;color:#17365d;letter-spacing:0.070px;left:1036.08px;">0</span>
<span style="top:605.30px;font:400 10.67px/14px 'Liberation Sans',sans-serif;color:#17365d;letter-spacing:0.070px;left:1109.08px;">0</span>
<span style="top:605.30px;font:400 10.67px/14px 'Liberation Sans',sans-serif;color:#17365d;letter-spacing:0.070px;left:1182.08px;">0</span>
<span style="top:605.30px;font:400 10.67px/14px 'Liberation Sans',sans-serif;color:#17365d;letter-spacing:0.070px;left:1256.08px;">0</span>
<span style="top:640.84px;font:700 12px/16px 'Liberation Sans',sans-serif;color:#17365d;letter-spacing:-0.020px;left:78.40px;">Operating Expenses</span>
<span style="top:642.30px;font:700 10.67px/14px 'Liberation Sans',sans-serif;color:#17365d;letter-spacing:0.070px;left:351.08px;">0</span>
<span style="top:642.30px;font:700 10.67px/14px 'Liberation Sans',sans-serif;color:#17365d;letter-spacing:0.070px;left:428.08px;">0</span>
<span style="top:642.30px;font:700 10.67px/14px 'Liberation Sans',sans-serif;color:#17365d;letter-spacing:0.070px;left:505.08px;">0</span>
<span style="top:642.30px;font:700 10.67px/14px 'Liberation Sans',sans-serif;color:#17365d;letter-spacing:0.070px;left:582.08px;">0</span>
<span style="top:642.30px;font:700 10.67px/14px 'Liberation Sans',sans-serif;color:#17365d;letter-spacing:0.070px;left:659.08px;">0</span>
<span style="top:642.30px;font:700 10.67px/14px 'Liberation Sans',sans-serif;color:#17365d;letter-spacing:0.070px;left:736.08px;">0</span>
<span style="top:642.30px;font:700 10.67px/14px 'Liberation Sans',sans-serif;color:#17365d;letter-spacing:0.070px;left:813.08px;">0</span>
<span style="top:642.30px;font:700 10.67px/14px 'Liberation Sans',sans-serif;color:#17365d;letter-spacing:0.070px;left:890.08px;">0</span>
<span style="top:642.30px;font:700 10.67px/14px 'Liberation Sans',sans-serif;color:#17365d;letter-spacing:0.070px;left:963.08px;">0</span>
<span style="top:642.30px;font:700 10.67px/14px 'Liberation Sans',sans-serif;color:#17365d;letter-spacing:0.070px;left:1036.08px;">0</span>
<span style="top:642.30px;font:700 10.67px/14px 'Liberation Sans',sans-serif;color:#17365d;letter-spacing:0.070px;left:1109.08px;">0</span>
<span style="top:642.30px;font:700 10.67px/14px 'Liberation Sans',sans-serif;color:#17365d;letter-spacing:0.070px;left:1182.08px;">0</span>
<span style="top:642.30px;font:700 10.67px/14px 'Liberation Sans',sans-serif;color:#17365d;letter-spacing:0.070px;left:1256.08px;">0</span>
<span style="top:657.84px;font:400 12px/16px 'Liberation Sans',sans-serif;color:#26476f;letter-spacing:0.458px;left:88.40px;">Rent and Utilities</span>
<span style="top:659.30px;font:400 10.67px/14px 'Liberation Sans',sans-serif;color:#17365d;letter-spacing:0.070px;left:351.08px;">0</span>
<span style="top:659.30px;font:400 10.67px/14px 'Liberation Sans',sans-serif;color:#17365d;letter-spacing:0.070px;left:428.08px;">0</span>
<span style="top:659.30px;font:400 10.67px/14px 'Liberation Sans',sans-serif;color:#17365d;letter-spacing:0.070px;left:505.08px;">0</span>
<span style="top:659.30px;font:400 10.67px/14px 'Liberation Sans',sans-serif;color:#17365d;letter-spacing:0.070px;left:582.08px;">0</span>
<span style="top:659.30px;font:400 10.67px/14px 'Liberation Sans',sans-serif;color:#17365d;letter-spacing:0.070px;left:659.08px;">0</span>
<span style="top:659.30px;font:400 10.67px/14px 'Liberation Sans',sans-serif;color:#17365d;letter-spacing:0.070px;left:736.08px;">0</span>
<span style="top:659.30px;font:400 10.67px/14px 'Liberation Sans',sans-serif;color:#17365d;letter-spacing:0.070px;left:813.08px;">0</span>
<span style="top:659.30px;font:400 10.67px/14px 'Liberation Sans',sans-serif;color:#17365d;letter-spacing:0.070px;left:890.08px;">0</span>
<span style="top:659.30px;font:400 10.67px/14px 'Liberation Sans',sans-serif;color:#17365d;letter-spacing:0.070px;left:963.08px;">0</span>
<span style="top:659.30px;font:400 10.67px/14px 'Liberation Sans',sans-serif;color:#17365d;letter-spacing:0.070px;left:1036.08px;">0</span>
<span style="top:659.30px;font:400 10.67px/14px 'Liberation Sans',sans-serif;color:#17365d;letter-spacing:0.070px;left:1109.08px;">0</span>
<span style="top:659.30px;font:400 10.67px/14px 'Liberation Sans',sans-serif;color:#17365d;letter-spacing:0.070px;left:1182.08px;">0</span>
<span style="top:676.84px;font:400 12px/16px 'Liberation Sans',sans-serif;color:#26476f;letter-spacing:0.669px;left:88.40px;">Other operating expenses</span>
<span style="top:678.30px;font:400 10.67px/14px 'Liberation Sans',sans-serif;color:#17365d;letter-spacing:0.070px;left:351.08px;">0</span>
<span style="top:678.30px;font:400 10.67px/14px 'Liberation Sans',sans-serif;color:#17365d;letter-spacing:0.070px;left:428.08px;">0</span>
<span style="top:678.30px;font:400 10.67px/14px 'Liberation Sans',sans-serif;color:#17365d;letter-spacing:0.070px;left:505.08px;">0</span>
<span style="top:678.30px;font:400 10.67px/14px 'Liberation Sans',sans-serif;color:#17365d;letter-spacing:0.070px;left:582.08px;">0</span>
<span style="top:678.30px;font:400 10.67px/14px 'Liberation Sans',sans-serif;color:#17365d;letter-spacing:0.070px;left:659.08px;">0</span>
<span style="top:678.30px;font:400 10.67px/14px 'Liberation Sans',sans-serif;color:#17365d;letter-spacing:0.070px;left:736.08px;">0</span>
<span style="top:678.30px;font:400 10.67px/14px 'Liberation Sans',sans-serif;color:#17365d;letter-spacing:0.070px;left:813.08px;">0</span>
<span style="top:678.30px;font:400 10.67px/14px 'Liberation Sans',sans-serif;color:#17365d;letter-spacing:0.070px;left:890.08px;">0</span>
<span style="top:678.30px;font:400 10.67px/14px 'Liberation Sans',sans-serif;color:#17365d;letter-spacing:0.070px;left:963.08px;">0</span>
<span style="top:678.30px;font:400 10.67px/14px 'Liberation Sans',sans-serif;color:#17365d;letter-spacing:0.070px;left:1036.08px;">0</span>
<span style="top:678.30px;font:400 10.67px/14px 'Liberation Sans',sans-serif;color:#17365d;letter-spacing:0.070px;left:1109.08px;">0</span>
<span style="top:678.30px;font:400 10.67px/14px 'Liberation Sans',sans-serif;color:#17365d;letter-spacing:0.070px;left:1182.08px;">0</span>
<span style="top:678.30px;font:400 10.67px/14px 'Liberation Sans',sans-serif;color:#17365d;letter-spacing:0.070px;left:1256.08px;">0</span>
<span style="top:695.84px;font:400 12px/16px 'Liberation Sans',sans-serif;color:#26476f;letter-spacing:0.504px;left:88.40px;">Other SGA costs</span>
<span style="top:697.30px;font:400 10.67px/14px 'Liberation Sans',sans-serif;color:#17365d;letter-spacing:0.070px;left:351.08px;">0</span>
<span style="top:697.30px;font:400 10.67px/14px 'Liberation Sans',sans-serif;color:#17365d;letter-spacing:0.070px;left:428.08px;">0</span>
<span style="top:697.30px;font:400 10.67px/14px 'Liberation Sans',sans-serif;color:#17365d;letter-spacing:0.070px;left:505.08px;">0</span>
<span style="top:697.30px;font:400 10.67px/14px 'Liberation Sans',sans-serif;color:#17365d;letter-spacing:0.070px;left:582.08px;">0</span>
<span style="top:697.30px;font:400 10.67px/14px 'Liberation Sans',sans-serif;color:#17365d;letter-spacing:0.070px;left:659.08px;">0</span>
<span style="top:697.30px;font:400 10.67px/14px 'Liberation Sans',sans-serif;color:#17365d;letter-spacing:0.070px;left:736.08px;">0</span>
<span style="top:697.30px;font:400 10.67px/14px 'Liberation Sans',sans-serif;color:#17365d;letter-spacing:0.070px;left:813.08px;">0</span>
<span style="top:697.30px;font:400 10.67px/14px 'Liberation Sans',sans-serif;color:#17365d;letter-spacing:0.070px;left:890.08px;">0</span>
<span style="top:697.30px;font:400 10.67px/14px 'Liberation Sans',sans-serif;color:#17365d;letter-spacing:0.070px;left:963.08px;">0</span>
<span style="top:697.30px;font:400 10.67px/14px 'Liberation Sans',sans-serif;color:#17365d;letter-spacing:0.070px;left:1036.08px;">0</span>
<span style="top:697.30px;font:400 10.67px/14px 'Liberation Sans',sans-serif;color:#17365d;letter-spacing:0.070px;left:1109.08px;">0</span>
<span style="top:697.30px;font:400 10.67px/14px 'Liberation Sans',sans-serif;color:#17365d;letter-spacing:0.070px;left:1182.08px;">0</span>
<span style="top:733.84px;font:400 12px/16px 'Liberation Sans',sans-serif;color:#26476f;letter-spacing:0.720px;left:88.40px;">Interest income</span>
<span style="top:735.30px;font:400 10.67px/14px 'Liberation Sans',sans-serif;color:#4680d2;letter-spacing:0.070px;left:351.08px;">0</span>
<span style="top:735.30px;font:400 10.67px/14px 'Liberation Sans',sans-serif;color:#4680d2;letter-spacing:0.070px;left:428.08px;">0</span>
<span style="top:735.30px;font:400 10.67px/14px 'Liberation Sans',sans-serif;color:#4680d2;letter-spacing:0.070px;left:505.08px;">0</span>
<span style="top:735.30px;font:400 10.67px/14px 'Liberation Sans',sans-serif;color:#4680d2;letter-spacing:0.070px;left:582.08px;">0</span>
<span style="top:735.30px;font:400 10.67px/14px 'Liberation Sans',sans-serif;color:#4680d2;letter-spacing:0.070px;left:659.08px;">0</span>
<span style="top:735.30px;font:400 10.67px/14px 'Liberation Sans',sans-serif;color:#4680d2;letter-spacing:0.070px;left:736.08px;">0</span>
<span style="top:735.30px;font:400 10.67px/14px 'Liberation Sans',sans-serif;color:#4680d2;letter-spacing:0.070px;left:813.08px;">0</span>
<span style="top:735.30px;font:400 10.67px/14px 'Liberation Sans',sans-serif;color:#4680d2;letter-spacing:0.070px;left:890.08px;">0</span>
<span style="top:735.30px;font:400 10.67px/14px 'Liberation Sans',sans-serif;color:#4680d2;letter-spacing:0.070px;left:963.08px;">0</span>
<span style="top:735.30px;font:400 10.67px/14px 'Liberation Sans',sans-serif;color:#4680d2;letter-spacing:0.070px;left:1036.08px;">0</span>
<span style="top:735.30px;font:400 10.67px/14px 'Liberation Sans',sans-serif;color:#4680d2;letter-spacing:0.070px;left:1109.08px;">0</span>
<span style="top:735.30px;font:400 10.67px/14px 'Liberation Sans',sans-serif;color:#4680d2;letter-spacing:0.070px;left:1182.08px;">0</span>
<span style="top:735.30px;font:400 10.67px/14px 'Liberation Sans',sans-serif;color:#17365d;letter-spacing:0.070px;left:1256.08px;">0</span>
<span style="top:752.84px;font:400 12px/16px 'Liberation Sans',sans-serif;color:#26476f;letter-spacing:0.485px;left:88.40px;">Interest expenses</span>
<span style="top:754.30px;font:400 10.67px/14px 'Liberation Sans',sans-serif;color:#17365d;letter-spacing:0.070px;left:329.99px;">2,292</span>
<span style="top:754.30px;font:400 10.67px/14px 'Liberation Sans',sans-serif;color:#17365d;letter-spacing:0.070px;left:406.99px;">2,292</span>
<span style="top:754.30px;font:400 10.67px/14px 'Liberation Sans',sans-serif;color:#17365d;letter-spacing:0.070px;left:483.99px;">2,292</span>
<span style="top:754.30px;font:400 10.67px/14px 'Liberation Sans',sans-serif;color:#17365d;letter-spacing:0.070px;left:560.99px;">2,292</span>
<span style="top:754.30px;font:400 10.67px/14px 'Liberation Sans',sans-serif;color:#17365d;letter-spacing:0.070px;left:637.99px;">2,292</span>
<span style="top:754.30px;font:400 10.67px/14px 'Liberation Sans',sans-serif;color:#17365d;letter-spacing:0.070px;left:714.99px;">2,292</span>
<span style="top:754.30px;font:400 10.67px/14px 'Liberation Sans',sans-serif;color:#17365d;letter-spacing:0.070px;left:791.99px;">2,292</span>
<span style="top:754.30px;font:400 10.67px/14px 'Liberation Sans',sans-serif;color:#17365d;letter-spacing:0.070px;left:868.99px;">2,292</span>
<span style="top:754.30px;font:400 10.67px/14px 'Liberation Sans',sans-serif;color:#17365d;letter-spacing:0.070px;left:941.99px;">2,292</span>
<span style="top:754.30px;font:400 10.67px/14px 'Liberation Sans',sans-serif;color:#17365d;letter-spacing:0.070px;left:1014.99px;">2,292</span>
<span style="top:754.30px;font:400 10.67px/14px 'Liberation Sans',sans-serif;color:#17365d;letter-spacing:0.070px;left:1087.99px;">2,292</span>
<span style="top:754.30px;font:400 10.67px/14px 'Liberation Sans',sans-serif;color:#17365d;letter-spacing:0.070px;left:1160.99px;">2,292</span>
<span style="top:754.30px;font:400 10.67px/14px 'Liberation Sans',sans-serif;color:#17365d;letter-spacing:0.070px;left:1229.00px;">27,500</span>
<span style="top:790.84px;font:700 12px/16px 'Liberation Sans',sans-serif;color:#17365d;letter-spacing:0.289px;left:78.40px;">Income before extraordinary items</span>
<span style="top:791.30px;font:700 10.67px/14px 'Liberation Sans',sans-serif;color:#17365d;letter-spacing:0.070px;left:308.96px;">1,617,055</span>
<span style="top:791.30px;font:700 10.67px/14px 'Liberation Sans',sans-serif;color:#17365d;letter-spacing:0.070px;left:385.96px;">1,644,276</span>
<span style="top:791.30px;font:700 10.67px/14px 'Liberation Sans',sans-serif;color:#17365d;letter-spacing:0.070px;left:462.96px;">1,715,254</span>
<span style="top:791.30px;font:700 10.67px/14px 'Liberation Sans',sans-serif;color:#17365d;letter-spacing:0.070px;left:539.96px;">1,733,506</span>
<span style="top:791.30px;font:700 10.67px/14px 'Liberation Sans',sans-serif;color:#17365d;letter-spacing:0.070px;left:616.96px;">1,804,191</span>
<span style="top:791.30px;font:700 10.67px/14px 'Liberation Sans',sans-serif;color:#17365d;letter-spacing:0.070px;left:693.96px;">1,825,756</span>
<span style="top:791.30px;font:700 10.67px/14px 'Liberation Sans',sans-serif;color:#17365d;letter-spacing:0.070px;left:770.96px;">1,848,058</span>
<span style="top:791.30px;font:700 10.67px/14px 'Liberation Sans',sans-serif;color:#17365d;letter-spacing:0.070px;left:847.96px;">1,871,121</span>
<span style="top:791.30px;font:700 10.67px/14px 'Liberation Sans',sans-serif;color:#17365d;letter-spacing:0.070px;left:920.96px;">1,894,970</span>
<span style="top:791.30px;font:700 10.67px/14px 'Liberation Sans',sans-serif;color:#17365d;letter-spacing:0.070px;left:993.96px;">1,919,634</span>
<span style="top:791.30px;font:700 10.67px/14px 'Liberation Sans',sans-serif;color:#17365d;letter-spacing:0.070px;left:1066.96px;">1,945,139</span>
<span style="top:791.30px;font:700 10.67px/14px 'Liberation Sans',sans-serif;color:#17365d;letter-spacing:0.070px;left:1139.96px;">1,971,515</span>
<span style="top:791.30px;font:700 10.67px/14px 'Liberation Sans',sans-serif;color:#17365d;letter-spacing:0.070px;left:1207.97px;">21,790,475</span>
<span style="top:96.75px;font:700 14px/18px 'Liberation Sans',sans-serif;color:#fff;letter-spacing:-0.032px;left:521.25px;">Company Name Profit and Loss Budget 2024</span>
<span style="top:130.67px;font:700 12.5px/16px 'Liberation Sans',sans-serif;color:#fff;left:310.70px;transform:scaleX(0.9528);transform-origin:0 0;">Feb</span>
<span style="top:130.67px;font:700 12.5px/16px 'Liberation Sans',sans-serif;color:#fff;letter-spacing:0.075px;left:387.10px;">Mar</span>
<span style="top:130.67px;font:700 12.5px/16px 'Liberation Sans',sans-serif;color:#fff;left:465.10px;transform:scaleX(0.9488);transform-origin:0 0;">Apr</span>
<span style="top:130.67px;font:700 12.5px/16px 'Liberation Sans',sans-serif;color:#fff;letter-spacing:0.494px;left:539.65px;">May</span>
<span style="top:130.67px;font:700 12.5px/16px 'Liberation Sans',sans-serif;color:#fff;left:619.90px;transform:scaleX(0.8449);transform-origin:0 0;-webkit-text-stroke:0.35px #fff;">Jun</span>
<span style="top:130.67px;font:700 12.5px/16px 'Liberation Sans',sans-serif;color:#fff;left:699.10px;transform:scaleX(0.7972);transform-origin:0 0;-webkit-text-stroke:0.35px #fff;">Jul</span>
<span style="top:130.67px;font:700 12.5px/16px 'Liberation Sans',sans-serif;color:#fff;left:772.10px;transform:scaleX(0.9213);transform-origin:0 0;">Aug</span>
<span style="top:130.67px;font:700 12.5px/16px 'Liberation Sans',sans-serif;color:#fff;left:849.40px;transform:scaleX(0.9504);transform-origin:0 0;">Sep</span>
<span style="top:130.67px;font:700 12.5px/16px 'Liberation Sans',sans-serif;color:#fff;letter-spacing:0.494px;left:924.40px;">Oct</span>
<span style="top:130.67px;font:700 12.5px/16px 'Liberation Sans',sans-serif;color:#fff;letter-spacing:-0.162px;left:996.65px;">Nov</span>
<span style="top:130.67px;font:700 12.5px/16px 'Liberation Sans',sans-serif;color:#fff;letter-spacing:0.181px;left:1069.65px;">Dec</span>
<span style="top:130.67px;font:700 12.5px/16px 'Liberation Sans',sans-serif;color:#fff;left:1144.35px;transform:scaleX(0.9229);transform-origin:0 0;">Jan</span>
<span style="top:130.67px;font:700 12.5px/16px 'Liberation Sans',sans-serif;color:#fff;left:1214.10px;transform:scaleX(0.9469);transform-origin:0 0;">Total</span>
<span style="top:133.31px;font:700 19.6px/25px 'Liberation Sans',sans-serif;color:#366092;left:1282.30px;transform:scaleX(0.8333);transform-origin:0 0;-webkit-text-stroke:0.35px #366092;">Instructions</span>
<span style="top:133.31px;font:700 19.6px/25px 'Liberation Sans',sans-serif;color:#366092;left:1380.00px;transform:scaleX(0.8733);transform-origin:0 0;-webkit-text-stroke:0.35px #366092;">–</span>
<span style="top:133.31px;font:700 19.6px/25px 'Liberation Sans',sans-serif;color:#366092;left:1395.80px;transform:scaleX(0.8367);transform-origin:0 0;-webkit-text-stroke:0.35px #366092;">P&amp;L</span>
<span style="top:177.68px;font:400 13.33px/17px 'Liberation Sans',sans-serif;color:#262626;left:1281.70px;transform:scaleX(0.7621);transform-origin:0 0;-webkit-text-stroke:0.22px #262626;">This</span>
<span style="top:177.68px;font:400 13.33px/17px 'Liberation Sans',sans-serif;color:#262626;left:1305.70px;transform:scaleX(0.6564);transform-origin:0 0;-webkit-text-stroke:0.22px #262626;">is</span>
<span style="top:177.68px;font:400 13.33px/17px 'Liberation Sans',sans-serif;color:#262626;left:1317.10px;transform:scaleX(0.9661);transform-origin:0 0;">the</span>
<span style="top:177.68px;font:400 13.33px/17px 'Liberation Sans',sans-serif;color:#262626;left:1340.56px;transform:scaleX(0.9614);transform-origin:0 0;">worksheet</span>
<span style="top:177.68px;font:400 13.33px/17px 'Liberation Sans',sans-serif;color:#262626;left:1404.80px;transform:scaleX(1.0646);transform-origin:0 0;">that</span>
<span style="top:197.48px;font:400 13.33px/17px 'Liberation Sans',sans-serif;color:#262626;left:1281.70px;transform:scaleX(0.9706);transform-origin:0 0;">three</span>
<span style="top:197.48px;font:400 13.33px/17px 'Liberation Sans',sans-serif;color:#262626;left:1318.50px;transform:scaleX(0.9853);transform-origin:0 0;">final</span>
<span style="top:197.48px;font:400 13.33px/17px 'Liberation Sans',sans-serif;color:#262626;left:1347.10px;transform:scaleX(0.9731);transform-origin:0 0;">stages</span>
<span style="top:197.48px;font:400 13.33px/17px 'Liberation Sans',sans-serif;color:#262626;left:1392.10px;transform:scaleX(1.0197);transform-origin:0 0;">that</span>
<span style="top:197.48px;font:400 13.33px/17px 'Liberation Sans',sans-serif;color:#262626;left:1420.60px;transform:scaleX(0.9505);transform-origin:0 0;">can</span>
<span style="top:216.68px;font:400 13.33px/17px 'Liberation Sans',sans-serif;color:#262626;left:1281.76px;transform:scaleX(0.9370);transform-origin:0 0;">worksheets.</span>
<span style="top:249.78px;font:700 13.33px/17px 'Liberation Sans',sans-serif;color:#262626;left:1281.70px;transform:scaleX(0.8299);transform-origin:0 0;-webkit-text-stroke:0.35px #262626;">Editing</span>
<span style="top:269.78px;font:400 13.33px/17px 'Liberation Sans',sans-serif;color:#262626;left:1281.70px;transform:scaleX(0.8709);transform-origin:0 0;-webkit-text-stroke:0.22px #262626;">There</span>
<span style="top:269.78px;font:400 13.33px/17px 'Liberation Sans',sans-serif;color:#262626;left:1317.30px;transform:scaleX(0.9968);transform-origin:0 0;">are</span>
<span style="top:269.78px;font:400 13.33px/17px 'Liberation Sans',sans-serif;color:#262626;left:1341.79px;transform:scaleX(0.8784);transform-origin:0 0;-webkit-text-stroke:0.22px #262626;">just</span>
<span style="top:269.78px;font:400 13.33px/17px 'Liberation Sans',sans-serif;color:#262626;left:1365.20px;transform:scaleX(0.9913);transform-origin:0 0;">a</span>
<span style="top:269.78px;font:400 13.33px/17px 'Liberation Sans',sans-serif;color:#262626;left:1377.40px;transform:scaleX(1.0317);transform-origin:0 0;">couple</span>
<span style="top:289.78px;font:400 13.33px/17px 'Liberation Sans',sans-serif;color:#262626;left:1281.76px;transform:scaleX(0.9517);transform-origin:0 0;">worksheet.</span>
<span style="top:289.78px;font:400 13.33px/17px 'Liberation Sans',sans-serif;color:#262626;left:1348.40px;transform:scaleX(0.8818);transform-origin:0 0;-webkit-text-stroke:0.22px #262626;">Their</span>
<span style="top:289.78px;font:400 13.33px/17px 'Liberation Sans',sans-serif;color:#262626;left:1380.50px;transform:scaleX(0.9928);transform-origin:0 0;">font</span>
<span style="top:289.78px;font:400 13.33px/17px 'Liberation Sans',sans-serif;color:#262626;left:1408.40px;transform:scaleX(1.1443);transform-origin:0 0;">color</span>
<span style="top:308.78px;font:400 13.33px/17px 'Liberation Sans',sans-serif;color:#262626;left:1281.70px;transform:scaleX(0.9102);transform-origin:0 0;-webkit-text-stroke:0.22px #262626;">rows</span>
<span style="top:308.78px;font:400 13.33px/17px 'Liberation Sans',sans-serif;color:#262626;left:1311.50px;transform:scaleX(0.7996);transform-origin:0 0;-webkit-text-stroke:0.22px #262626;">9,</span>
<span style="top:308.78px;font:400 13.33px/17px 'Liberation Sans',sans-serif;color:#262626;left:1324.60px;transform:scaleX(0.8581);transform-origin:0 0;-webkit-text-stroke:0.22px #262626;">24,</span>
<span style="top:308.78px;font:400 13.33px/17px 'Liberation Sans',sans-serif;color:#262626;left:1344.70px;transform:scaleX(0.8527);transform-origin:0 0;-webkit-text-stroke:0.22px #262626;">37,</span>
<span style="top:308.78px;font:400 13.33px/17px 'Liberation Sans',sans-serif;color:#262626;left:1365.80px;transform:scaleX(0.8527);transform-origin:0 0;-webkit-text-stroke:0.22px #262626;">42,</span>
<span style="top:308.78px;font:400 13.33px/17px 'Liberation Sans',sans-serif;color:#262626;left:1385.80px;transform:scaleX(0.8203);transform-origin:0 0;-webkit-text-stroke:0.22px #262626;">43,</span>
<span style="top:308.78px;font:400 13.33px/17px 'Liberation Sans',sans-serif;color:#262626;left:1406.30px;transform:scaleX(0.7988);transform-origin:0 0;-webkit-text-stroke:0.22px #262626;">49.</span>
<div style="left:0px;top:145px;width:1423px;height:1px;background:#9e9e9e;"></div>
</div>
<div style="left:0px;top:0px;width:1423px;height:37px;background:#0c0c0c;"></div>
<div style="left:0px;top:37px;width:1423px;height:31px;background:#262626;"></div>
<div style="left:0px;top:67px;width:1423px;height:1px;background:#181818;"></div>
<div style="left:0px;top:68px;width:1423px;height:14px;background:#0a0a0a;"></div>
<div style="left:0px;top:82px;width:1423px;height:1px;background:#5a5a5a;"></div>
<div style="left:0px;top:83px;width:21px;height:713px;background:#0a0a0a;"></div>
<div style="left:21px;top:68px;width:1px;height:728px;background:#6a6a6a;"></div>
<div style="left:282px;top:37px;width:1px;height:759px;background:#9b9b9b;"></div>
<div style="left:75px;top:68px;width:1px;height:14px;background:#505050;"></div>
<span style="top:68.12px;font:400 11.5px/15px 'Liberation Sans',sans-serif;color:#fff;left:44.65px;">A</span>
<span style="top:68.12px;font:400 11.5px/15px 'Liberation Sans',sans-serif;color:#fff;left:175.18px;">B</span>
<div style="left:359px;top:68px;width:1px;height:14px;background:#505050;"></div>
<span style="top:68.12px;font:400 11.5px/15px 'Liberation Sans',sans-serif;color:#fff;left:316.86px;">C</span>
<div style="left:436px;top:68px;width:1px;height:14px;background:#505050;"></div>
<span style="top:68.12px;font:400 11.5px/15px 'Liberation Sans',sans-serif;color:#fff;left:393.86px;">D</span>
<div style="left:513px;top:68px;width:1px;height:14px;background:#505050;"></div>
<span style="top:68.12px;font:400 11.5px/15px 'Liberation Sans',sans-serif;color:#fff;left:471.18px;">E</span>
<div style="left:590px;top:68px;width:1px;height:14px;background:#505050;"></div>
<span style="top:68.12px;font:400 11.5px/15px 'Liberation Sans',sans-serif;color:#fff;left:548.49px;">F</span>
<div style="left:667px;top:68px;width:1px;height:14px;background:#505050;"></div>
<span style="top:68.12px;font:400 11.5px/15px 'Liberation Sans',sans-serif;color:#fff;left:624.51px;">G</span>
<div style="left:744px;top:68px;width:1px;height:14px;background:#505050;"></div>
<span style="top:68.12px;font:400 11.5px/15px 'Liberation Sans',sans-serif;color:#fff;left:701.86px;">H</span>
<div style="left:821px;top:68px;width:1px;height:14px;background:#505050;"></div>
<span style="top:68.12px;font:400 11.5px/15px 'Liberation Sans',sans-serif;color:#fff;left:781.39px;">I</span>
<div style="left:898px;top:68px;width:1px;height:14px;background:#505050;"></div>
<span style="top:68.12px;font:400 11.5px/15px 'Liberation Sans',sans-serif;color:#fff;left:857.12px;">J</span>
<div style="left:971px;top:68px;width:1px;height:14px;background:#505050;"></div>
<span style="top:68.12px;font:400 11.5px/15px 'Liberation Sans',sans-serif;color:#fff;left:931.18px;">K</span>
<div style="left:1044px;top:68px;width:1px;height:14px;background:#505050;"></div>
<span style="top:68.12px;font:400 11.5px/15px 'Liberation Sans',sans-serif;color:#fff;left:1004.81px;">L</span>
<div style="left:1117px;top:68px;width:1px;height:14px;background:#505050;"></div>
<span style="top:68.12px;font:400 11.5px/15px 'Liberation Sans',sans-serif;color:#fff;left:1076.20px;">M</span>
<div style="left:1190px;top:68px;width:1px;height:14px;background:#505050;"></div>
<span style="top:68.12px;font:400 11.5px/15px 'Liberation Sans',sans-serif;color:#fff;left:1149.86px;">N</span>
<div style="left:1264px;top:68px;width:1px;height:14px;background:#505050;"></div>
<span style="top:68.12px;font:400 11.5px/15px 'Liberation Sans',sans-serif;color:#fff;left:1223.02px;">O</span>
<div style="left:1319px;top:68px;width:1px;height:14px;background:#505050;"></div>
<span style="top:68.12px;font:400 11.5px/15px 'Liberation Sans',sans-serif;color:#fff;left:1288.18px;">P</span>
<div style="left:1374px;top:68px;width:1px;height:14px;background:#505050;"></div>
<span style="top:68.12px;font:400 11.5px/15px 'Liberation Sans',sans-serif;color:#fff;left:1342.52px;">Q</span>
<div style="left:1429px;top:68px;width:1px;height:14px;background:#505050;"></div>
<span style="top:68.12px;font:400 11.5px/15px 'Liberation Sans',sans-serif;color:#fff;left:1397.86px;">R</span>
<div style="left:0px;top:96px;width:21px;height:1px;background:#5f5f5f;"></div>
<span style="top:82.79px;font:400 11px/14px 'Liberation Sans',sans-serif;color:#fff;left:7.45px;">1</span>
<div style="left:0px;top:114px;width:21px;height:1px;background:#5f5f5f;"></div>
<span style="top:99.39px;font:400 11px/14px 'Liberation Sans',sans-serif;color:#fff;left:7.45px;">2</span>
<div style="left:0px;top:129px;width:21px;height:1px;background:#5f5f5f;"></div>
<span style="top:115.89px;font:400 11px/14px 'Liberation Sans',sans-serif;color:#fff;left:7.45px;">3</span>
<div style="left:0px;top:145px;width:21px;height:1px;background:#5f5f5f;"></div>
<span style="top:131.39px;font:400 11px/14px 'Liberation Sans',sans-serif;color:#fff;left:7.45px;">4</span>
<div style="left:0px;top:161px;width:21px;height:1px;background:#5f5f5f;"></div>
<span style="top:147.39px;font:400 11px/14px 'Liberation Sans',sans-serif;color:#fff;left:7.45px;">5</span>
<div style="left:0px;top:177px;width:21px;height:1px;background:#5f5f5f;"></div>
<span style="top:163.39px;font:400 11px/14px 'Liberation Sans',sans-serif;color:#fff;left:7.45px;">6</span>
<div style="left:0px;top:196px;width:21px;height:1px;background:#5f5f5f;"></div>
<span style="top:180.89px;font:400 11px/14px 'Liberation Sans',sans-serif;color:#fff;left:7.45px;">7</span>
<div style="left:0px;top:215px;width:21px;height:1px;background:#5f5f5f;"></div>
<span style="top:199.89px;font:400 11px/14px 'Liberation Sans',sans-serif;color:#fff;left:7.45px;">8</span>
<div style="left:0px;top:234px;width:21px;height:1px;background:#5f5f5f;"></div>
<span style="top:218.89px;font:400 11px/14px 'Liberation Sans',sans-serif;color:#fff;left:7.45px;">9</span>
<div style="left:0px;top:253px;width:21px;height:1px;background:#5f5f5f;"></div>
<span style="top:237.89px;font:400 11px/14px 'Liberation Sans',sans-serif;color:#fff;left:4.39px;">10</span>
<div style="left:0px;top:269px;width:21px;height:1px;background:#5f5f5f;"></div>
<span style="top:255.39px;font:400 11px/14px 'Liberation Sans',sans-serif;color:#fff;left:4.78px;">11</span>
<div style="left:0px;top:288px;width:21px;height:1px;background:#5f5f5f;"></div>
<span style="top:272.89px;font:400 11px/14px 'Liberation Sans',sans-serif;color:#fff;left:4.39px;">12</span>
<div style="left:0px;top:307px;width:21px;height:1px;background:#5f5f5f;"></div>
<span style="top:291.89px;font:400 11px/14px 'Liberation Sans',sans-serif;color:#fff;left:4.39px;">13</span>
<div style="left:0px;top:326px;width:21px;height:1px;background:#5f5f5f;"></div>
<span style="top:310.89px;font:400 11px/14px 'Liberation Sans',sans-serif;color:#fff;left:4.39px;">14</span>
<div style="left:0px;top:345px;width:21px;height:1px;background:#5f5f5f;"></div>
<span style="top:329.89px;font:400 11px/14px 'Liberation Sans',sans-serif;color:#fff;left:4.39px;">15</span>
<div style="left:0px;top:364px;width:21px;height:1px;background:#5f5f5f;"></div>
<span style="top:348.89px;font:400 11px/14px 'Liberation Sans',sans-serif;color:#fff;left:4.39px;">16</span>
<div style="left:0px;top:383px;width:21px;height:1px;background:#5f5f5f;"></div>
<span style="top:367.89px;font:400 11px/14px 'Liberation Sans',sans-serif;color:#fff;left:4.39px;">17</span>
<div style="left:0px;top:402px;width:21px;height:1px;background:#5f5f5f;"></div>
<span style="top:386.89px;font:400 11px/14px 'Liberation Sans',sans-serif;color:#fff;left:4.39px;">18</span>
<div style="left:0px;top:421px;width:21px;height:1px;background:#5f5f5f;"></div>
<span style="top:405.89px;font:400 11px/14px 'Liberation Sans',sans-serif;color:#fff;left:4.39px;">19</span>
<div style="left:0px;top:438px;width:21px;height:1px;background:#5f5f5f;"></div>
<span style="top:423.89px;font:400 11px/14px 'Liberation Sans',sans-serif;color:#fff;left:4.39px;">20</span>
<div style="left:0px;top:455px;width:21px;height:1px;background:#5f5f5f;"></div>
<span style="top:440.89px;font:400 11px/14px 'Liberation Sans',sans-serif;color:#fff;left:4.39px;">21</span>
<div style="left:0px;top:471px;width:21px;height:1px;background:#5f5f5f;"></div>
<span style="top:457.39px;font:400 11px/14px 'Liberation Sans',sans-serif;color:#fff;left:4.39px;">22</span>
<div style="left:0px;top:490px;width:21px;height:1px;background:#5f5f5f;"></div>
<span style="top:474.89px;font:400 11px/14px 'Liberation Sans',sans-serif;color:#fff;left:4.39px;">23</span>
<div style="left:0px;top:509px;width:21px;height:1px;background:#5f5f5f;"></div>
<span style="top:493.89px;font:400 11px/14px 'Liberation Sans',sans-serif;color:#fff;left:4.39px;">24</span>
<div style="left:0px;top:528px;width:21px;height:1px;background:#5f5f5f;"></div>
<span style="top:512.89px;font:400 11px/14px 'Liberation Sans',sans-serif;color:#fff;left:4.39px;">25</span>
<div style="left:0px;top:544px;width:21px;height:1px;background:#5f5f5f;"></div>
<span style="top:530.39px;font:400 11px/14px 'Liberation Sans',sans-serif;color:#fff;left:4.39px;">26</span>
<div style="left:0px;top:563px;width:21px;height:1px;background:#5f5f5f;"></div>
<span style="top:547.89px;font:400 11px/14px 'Liberation Sans',sans-serif;color:#fff;left:4.39px;">27</span>
<div style="left:0px;top:582px;width:21px;height:1px;background:#5f5f5f;"></div>
<span style="top:566.89px;font:400 11px/14px 'Liberation Sans',sans-serif;color:#fff;left:4.39px;">28</span>
<div style="left:0px;top:601px;width:21px;height:1px;background:#5f5f5f;"></div>
<span style="top:585.89px;font:400 11px/14px 'Liberation Sans',sans-serif;color:#fff;left:4.39px;">29</span>
<div style="left:0px;top:620px;width:21px;height:1px;background:#5f5f5f;"></div>
<span style="top:604.89px;font:400 11px/14px 'Liberation Sans',sans-serif;color:#fff;left:4.39px;">30</span>
<div style="left:0px;top:639px;width:21px;height:1px;background:#5f5f5f;"></div>
<span style="top:623.89px;font:400 11px/14px 'Liberation Sans',sans-serif;color:#fff;left:4.39px;">31</span>
<div style="left:0px;top:655px;width:21px;height:1px;background:#5f5f5f;"></div>
<span style="top:641.39px;font:400 11px/14px 'Liberation Sans',sans-serif;color:#fff;left:4.39px;">32</span>
<div style="left:0px;top:674px;width:21px;height:1px;background:#5f5f5f;"></div>
<span style="top:658.89px;font:400 11px/14px 'Liberation Sans',sans-serif;color:#fff;left:4.39px;">33</span>
<div style="left:0px;top:693px;width:21px;height:1px;background:#5f5f5f;"></div>
<span style="top:677.89px;font:400 11px/14px 'Liberation Sans',sans-serif;color:#fff;left:4.39px;">34</span>
<div style="left:0px;top:712px;width:21px;height:1px;background:#5f5f5f;"></div>
<span style="top:696.89px;font:400 11px/14px 'Liberation Sans',sans-serif;color:#fff;left:4.39px;">35</span>
<div style="left:0px;top:731px;width:21px;height:1px;background:#5f5f5f;"></div>
<span style="top:715.89px;font:400 11px/14px 'Liberation Sans',sans-serif;color:#fff;left:4.39px;">36</span>
<div style="left:0px;top:750px;width:21px;height:1px;background:#5f5f5f;"></div>
<span style="top:734.89px;font:400 11px/14px 'Liberation Sans',sans-serif;color:#fff;left:4.39px;">37</span>
<div style="left:0px;top:769px;width:21px;height:1px;background:#5f5f5f;"></div>
<span style="top:753.89px;font:400 11px/14px 'Liberation Sans',sans-serif;color:#fff;left:4.39px;">38</span>
<div style="left:0px;top:788px;width:21px;height:1px;background:#5f5f5f;"></div>
<span style="top:772.89px;font:400 11px/14px 'Liberation Sans',sans-serif;color:#fff;left:4.39px;">39</span>
<span style="top:791.89px;font:400 11px/14px 'Liberation Sans',sans-serif;color:#fff;left:4.39px;">40</span>
<svg style="left:0;top:68px" width="22" height="15" viewBox="0 0 22 15"><polygon points="18.2,4.2 18.2,11 11.2,11" fill="#6e6e6e"/></svg>
<div style="left:3px;top:39px;width:13px;height:26px;background:#e8e8e8;border:1px solid #8b94a5;box-sizing:border-box;"></div>
<div style="left:3px;top:51px;width:13px;height:2px;background:#8b94a5;"></div>
<span style="top:39.19px;font:400 11px/14px 'Liberation Sans',sans-serif;color:#3c3c3c;left:6.55px;">1</span>
<span style="top:52.19px;font:400 11px/14px 'Liberation Sans',sans-serif;color:#3c3c3c;left:6.55px;">2</span>
<div style="left:284px;top:42px;width:937px;height:2px;background:#a9a9a9;"></div>
<div style="left:284px;top:42px;width:2px;height:6px;background:#a9a9a9;"></div>
<div style="left:320px;top:55px;width:2px;height:2px;background:#c4c4c4;"></div>
<div style="left:397px;top:55px;width:2px;height:2px;background:#c4c4c4;"></div>
<div style="left:474px;top:55px;width:2px;height:2px;background:#c4c4c4;"></div>
<div style="left:551px;top:55px;width:2px;height:2px;background:#c4c4c4;"></div>
<div style="left:628px;top:55px;width:2px;height:2px;background:#c4c4c4;"></div>
<div style="left:705px;top:55px;width:2px;height:2px;background:#c4c4c4;"></div>
<div style="left:782px;top:55px;width:2px;height:2px;background:#c4c4c4;"></div>
<div style="left:859px;top:55px;width:2px;height:2px;background:#c4c4c4;"></div>
<div style="left:934px;top:55px;width:2px;height:2px;background:#c4c4c4;"></div>
<div style="left:1007px;top:55px;width:2px;height:2px;background:#c4c4c4;"></div>
<div style="left:1080px;top:55px;width:2px;height:2px;background:#c4c4c4;"></div>
<div style="left:1153px;top:55px;width:2px;height:2px;background:#c4c4c4;"></div>
<div style="left:1221px;top:39px;width:13px;height:13px;background:#e6e6e6;border:1px solid #8b94a5;box-sizing:border-box;"></div>
<div style="left:1224px;top:45px;width:8px;height:2px;background:#444;"></div>
<div style="left:7px;top:4px;width:102px;height:26px;background:#262626;border:1px solid #5a5a5a;box-sizing:border-box;border-radius:4px;"></div>
<span style="top:9.00px;font:400 13px/17px 'Liberation Sans',sans-serif;color:#fff;left:14.50px;">A1</span>
<svg style="left:92px;top:13px" width="14" height="10" viewBox="0 0 14 10"><path d="M1.5 2.5 L6.5 7.5 L11.5 2.5" fill="none" stroke="#e6e6e6" stroke-width="1.3"/></svg>
<div style="left:118px;top:11.3px;width:2px;height:2px;background:#d0d0d0;"></div>
<div style="left:118px;top:15.600000000000001px;width:2px;height:2px;background:#d0d0d0;"></div>
<div style="left:118px;top:19.9px;width:2px;height:2px;background:#d0d0d0;"></div>
<div style="left:129px;top:4px;width:74px;height:26px;background:#262626;border:1px solid #5a5a5a;box-sizing:border-box;border-radius:4px;"></div>
<svg style="left:129px;top:4px" width="74" height="26" viewBox="0 0 74 26"><path d="M7.5 7.5 L18.5 18.5 M18.5 7.5 L7.5 18.5" stroke="#8a8a8a" stroke-width="1.1" fill="none"/><path d="M29.5 13.5 L34.5 18.5 L45 7.5" stroke="#8a8a8a" stroke-width="1.1" fill="none"/></svg>
<span style="left:183px;top:4.5px;font:italic 400 17px/22px 'Liberation Serif',serif;color:#d2d2d2;letter-spacing:1.2px;-webkit-text-stroke:0.25px #d2d2d2">fx</span>
<div style="left:207px;top:4px;width:1240px;height:26px;background:#262626;border:1px solid #5a5a5a;box-sizing:border-box;border-radius:4px;"></div>
<div style="left:0px;top:796px;width:1423px;height:32px;background:#0a0a0a;"></div>
<div style="left:0px;top:796px;width:1423px;height:1px;background:#2a2a2a;"></div>
<div style="left:0px;top:828px;width:1423px;height:24px;background:#141414;"></div>
<div style="left:0px;top:828px;width:1423px;height:1px;background:#303030;"></div>
<div style="left:0px;top:850px;width:1423px;height:2px;background:#383838;"></div>
<svg style="left:20px;top:800px" width="60" height="24" viewBox="0 0 60 24"><path d="M13.5 6.5 L8 12 L13.5 17.5" fill="none" stroke="#9a9a9a" stroke-width="1.3"/><path d="M40.5 6.5 L46 12 L40.5 17.5" fill="none" stroke="#9a9a9a" stroke-width="1.3"/></svg>
<div style="left:115px;top:800px;width:91px;height:24px;background:#b1a0c7;border-radius:4px;"></div>
<span style="top:803.88px;font:400 13.33px/17px 'Liberation Sans',sans-serif;color:#1a1a1a;letter-spacing:0.265px;left:124.95px;">Instructions</span>
<div style="left:215px;top:800px;width:98px;height:24px;background:#b1a0c7;border-radius:4px;"></div>
<span style="top:803.88px;font:400 13.33px/17px 'Liberation Sans',sans-serif;color:#1a1a1a;letter-spacing:0.259px;left:224.55px;">Assumptions</span>
<div style="left:322px;top:800px;width:32.19999999999999px;height:24px;background:#da9694;border-radius:4px;"></div>
<span style="top:803.88px;font:400 13.33px/17px 'Liberation Sans',sans-serif;color:#1a1a1a;left:330.65px;transform:scaleX(0.8373);transform-origin:0 0;-webkit-text-stroke:0.22px #1a1a1a;">BS</span>
<div style="left:358px;top:796px;width:4px;height:4px;background:#ddd9c4;"></div>
<div style="left:358px;top:796px;width:4px;height:4px;background:#0a0a0a;border-top-right-radius:4px;"></div>
<div style="left:394px;top:796px;width:4px;height:4px;background:#ddd9c4;"></div>
<div style="left:394px;top:796px;width:4px;height:4px;background:#0a0a0a;border-top-left-radius:4px;"></div>
<div style="left:362px;top:796px;width:32px;height:28px;box-sizing:border-box;border:1px solid #fff;border-top:0;border-radius:0 0 5px 5px;background:linear-gradient(#ffffff 12%,#cbd9ea 100%);"></div>
<span style="top:801.38px;font:400 13.33px/17px 'Liberation Sans',sans-serif;color:#1e1e1e;left:371.85px;transform:scaleX(0.8635);transform-origin:0 0;-webkit-text-stroke:0.22px #1e1e1e;">PL</span>
<div style="left:371px;top:819px;width:15px;height:2px;background:#107c37;"></div>
<div style="left:403px;top:800px;width:32.19999999999999px;height:24px;background:#c4d79b;border-radius:4px;"></div>
<span style="top:803.88px;font:400 13.33px/17px 'Liberation Sans',sans-serif;color:#1a1a1a;left:411.45px;transform:scaleX(0.8598);transform-origin:0 0;-webkit-text-stroke:0.22px #1a1a1a;">CF</span>
<div style="left:444px;top:800px;width:48px;height:24px;background:#95b3d7;border-radius:4px;"></div>
<span style="top:803.88px;font:400 13.33px/17px 'Liberation Sans',sans-serif;color:#1a1a1a;left:452.80px;transform:scaleX(0.9122);transform-origin:0 0;-webkit-text-stroke:0.22px #1a1a1a;">Sales</span>
<div style="left:501px;top:800px;width:110px;height:24px;background:#95b3d7;border-radius:4px;"></div>
<span style="top:803.88px;font:400 13.33px/17px 'Liberation Sans',sans-serif;color:#1a1a1a;letter-spacing:0.455px;left:511.05px;">Manufacturing</span>
<div style="left:620px;top:800px;width:104px;height:24px;background:#95b3d7;border-radius:4px;"></div>
<span style="top:803.88px;font:400 13.33px/17px 'Liberation Sans',sans-serif;color:#1a1a1a;left:629.25px;transform:scaleX(0.9538);transform-origin:0 0;">SGA Expenses</span>
<div style="left:733px;top:800px;width:64px;height:24px;background:#95b3d7;border-radius:4px;"></div>
<span style="top:803.88px;font:400 13.33px/17px 'Liberation Sans',sans-serif;color:#1a1a1a;letter-spacing:-0.298px;left:741.95px;">Salaries</span>
<div style="left:806px;top:800px;width:79px;height:24px;background:#da9694;border-radius:4px;"></div>
<span style="top:803.88px;font:400 13.33px/17px 'Liberation Sans',sans-serif;color:#1a1a1a;letter-spacing:-0.286px;left:815.15px;">Purchases</span>
<div style="left:894px;top:800px;width:102px;height:24px;background:#da9694;border-radius:4px;"></div>
<span style="top:803.88px;font:400 13.33px/17px 'Liberation Sans',sans-serif;color:#1a1a1a;letter-spacing:-0.083px;left:903.60px;">AR, Advances</span>
<div style="left:1005px;top:800px;width:127.70000000000005px;height:24px;background:#da9694;border-radius:4px;"></div>
<span style="top:803.88px;font:400 13.33px/17px 'Liberation Sans',sans-serif;color:#1a1a1a;letter-spacing:0.066px;left:1015.00px;">Accounts Payable</span>
<div style="left:1142px;top:800px;width:55px;height:24px;background:#da9694;border-radius:4px;"></div>
<span style="top:803.88px;font:400 13.33px/17px 'Liberation Sans',sans-serif;color:#1a1a1a;letter-spacing:-0.231px;left:1150.70px;">Capex</span>
<div style="left:1206px;top:800px;width:77px;height:24px;background:#da9694;border-radius:4px;"></div>
<span style="top:803.88px;font:400 13.33px/17px 'Liberation Sans',sans-serif;color:#1a1a1a;letter-spacing:0.039px;left:1215.45px;">Financing</span>
<div style="left:210px;top:803px;width:1px;height:18px;background:#5a5a5a;"></div>
<div style="left:317px;top:803px;width:1px;height:18px;background:#5a5a5a;"></div>
<div style="left:358px;top:803px;width:1px;height:18px;background:#5a5a5a;"></div>
<div style="left:398px;top:803px;width:1px;height:18px;background:#5a5a5a;"></div>
<div style="left:439px;top:803px;width:1px;height:18px;background:#5a5a5a;"></div>
<div style="left:496px;top:803px;width:1px;height:18px;background:#5a5a5a;"></div>
<div style="left:615px;top:803px;width:1px;height:18px;background:#5a5a5a;"></div>
<div style="left:728px;top:803px;width:1px;height:18px;background:#5a5a5a;"></div>
<div style="left:801px;top:803px;width:1px;height:18px;background:#5a5a5a;"></div>
<div style="left:889px;top:803px;width:1px;height:18px;background:#5a5a5a;"></div>
<div style="left:1000px;top:803px;width:1px;height:18px;background:#5a5a5a;"></div>
<div style="left:1137px;top:803px;width:1px;height:18px;background:#5a5a5a;"></div>
<div style="left:1201px;top:803px;width:1px;height:18px;background:#5a5a5a;"></div>
<div style="left:1287px;top:803px;width:1px;height:18px;background:#5a5a5a;"></div>
<div style="left:1399px;top:803px;width:1px;height:18px;background:#5a5a5a;"></div>
<span style="top:803.88px;font:400 13.33px/17px 'Liberation Sans',sans-serif;color:#fff;letter-spacing:0.171px;left:1300.85px;">Chart Helpers</span>
<span style="top:832.99px;font:400 10.7px/14px 'Liberation Sans',sans-serif;color:#fff;letter-spacing:-0.081px;left:6.30px;">Ready</span>
<span style="top:832.99px;font:400 10.7px/14px 'Liberation Sans',sans-serif;color:#fff;letter-spacing:0.260px;left:75.30px;">Accessibility: Investigate</span>
<svg style="left:56px;top:831px" width="17" height="17" viewBox="0 0 17 17" fill="none" stroke="#fff" stroke-width="1.15"><circle cx="7" cy="3.1" r="1.5"/><path d="M8.8 7.4 L8.8 6.3 L11.4 5.4 C11.9 5.3 12.3 5.1 12.4 4.6 C12.8 3.6 11.8 3 11 3.4 L8.4 4.6 C7.5 5 6.5 5 5.6 4.6 L3 3.4 C2.2 3 1.2 3.6 1.6 4.6 C1.8 5.1 2.2 5.3 2.6 5.4 L5.2 6.3 L5.2 9 L3.4 13.6 C3.1 14.6 4.4 15.2 4.9 14.2 L6.2 11"/><path d="M8.4 8.6 L14.8 15 M14.8 8.6 L8.4 15"/></svg>
</div></body></html>
